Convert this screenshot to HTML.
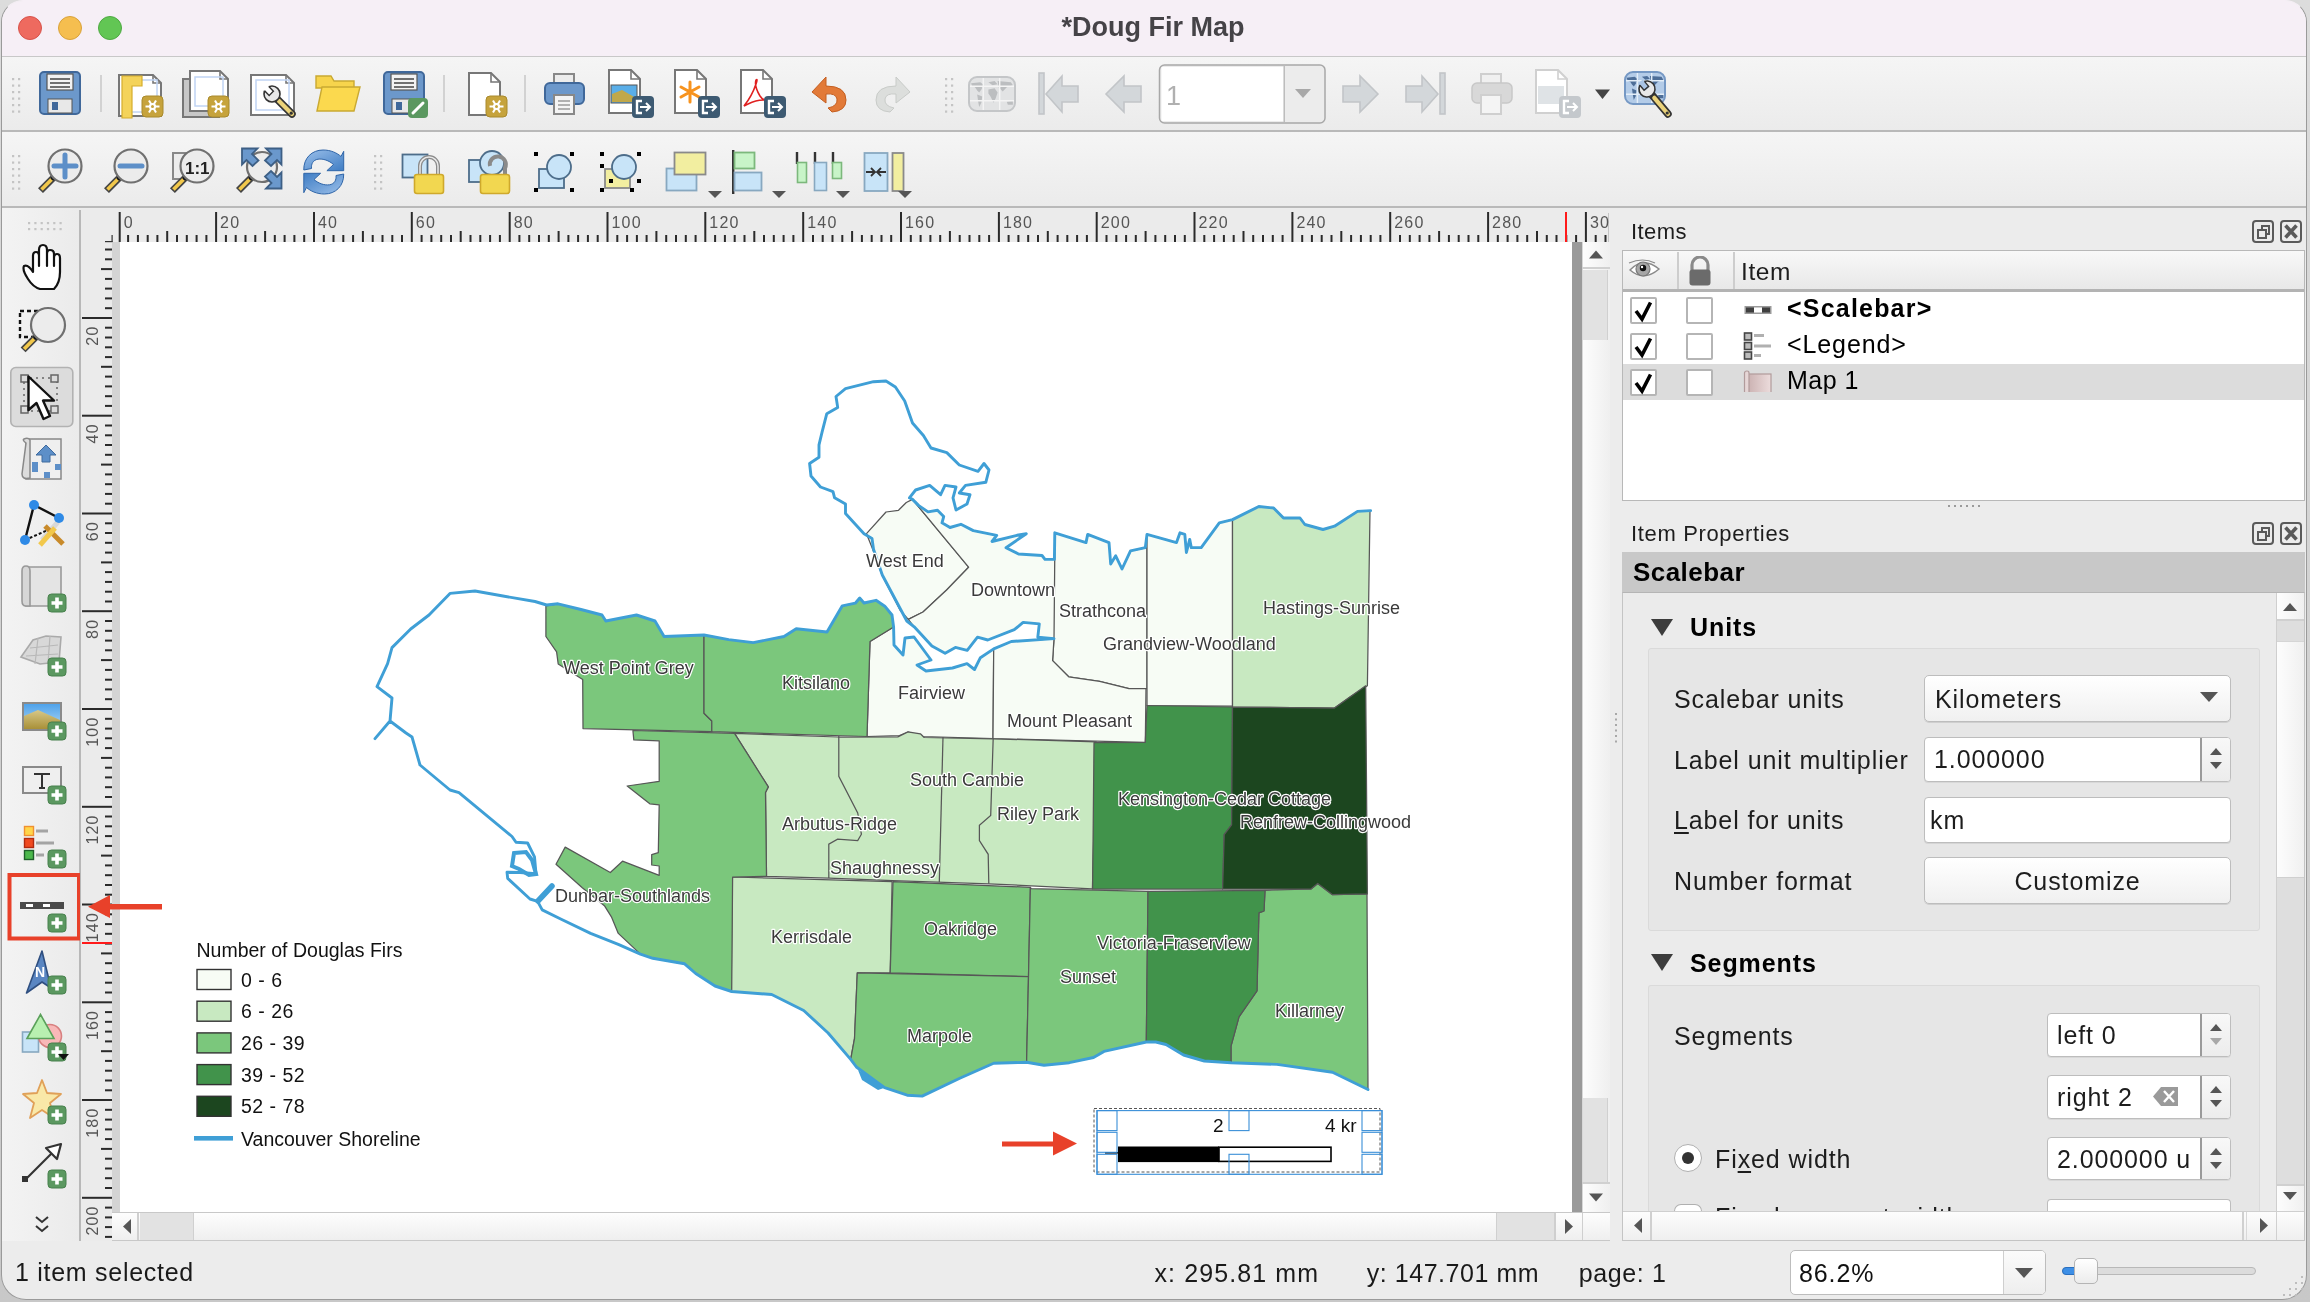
<!DOCTYPE html>
<html><head><meta charset="utf-8">
<style>
*{margin:0;padding:0;box-sizing:border-box}
html,body{width:2310px;height:1302px;overflow:hidden;background:#cfcfcf;font-family:"Liberation Sans", sans-serif}
body{will-change:transform}
.a{position:absolute}
.t{position:absolute;white-space:nowrap;color:#1d1d1d;line-height:1}
</style></head><body>
<div class="a" style="left:0;top:0;width:2310px;height:1302px;background:linear-gradient(#dcdcdc,#c8c8c8)"></div>
<div class="a" style="left:1px;top:0;width:2306px;height:1300px;border-radius:22px 22px 25px 25px;background:#ececec;border:1px solid #9a9a9a;border-top-color:#f6eff6;overflow:hidden">
</div>
<!-- title bar -->
<div class="a" style="left:2px;top:1px;width:2304px;height:55px;background:#f6eff6;border-radius:21px 21px 0 0"></div>
<div class="a" style="left:2px;top:56px;width:2304px;height:1px;background:#c8c8c8"></div>
<div class="a" style="left:18px;top:16px;width:24px;height:24px;border-radius:50%;background:#ee6a5f;border:1px solid #d8524a"></div>
<div class="a" style="left:58px;top:16px;width:24px;height:24px;border-radius:50%;background:#f5be4f;border:1px solid #d9a23a"></div>
<div class="a" style="left:98px;top:16px;width:24px;height:24px;border-radius:50%;background:#62c654;border:1px solid #4ea942"></div>
<div class="t" style="left:0;width:2306px;text-align:center;top:14px;font-size:27px;font-weight:bold;color:#454347">*Doug Fir Map</div>
<!-- toolbars -->
<div class="a" style="left:2px;top:57px;width:2304px;height:74px;background:linear-gradient(#f5f5f5,#ebebeb)"></div>
<div class="a" style="left:2px;top:130px;width:2304px;height:2px;background:#b9b9b9"></div>
<div class="a" style="left:2px;top:132px;width:2304px;height:75px;background:linear-gradient(#f5f5f5,#ebebeb)"></div>
<div class="a" style="left:2px;top:206px;width:2304px;height:2px;background:#b9b9b9"></div>
<!-- main area -->
<div class="a" style="left:2px;top:208px;width:2304px;height:1033px;background:#ececec"></div>
<div class="a" style="left:2px;top:208px;width:78px;height:1033px;background:linear-gradient(90deg,#f3f3f3,#ebebeb)"></div>
<div class="a" style="left:79px;top:210px;width:2px;height:1031px;background:#b8b8b8"></div>
<!-- canvas -->
<div class="a" style="left:112px;top:242px;width:1470px;height:970px;background:#d4d4d4"></div>
<div class="a" style="left:120px;top:242px;width:1452px;height:970px;background:#ffffff"></div>
<div class="a" style="left:1572px;top:242px;width:10px;height:970px;background:#9a9a9a"></div>
<!-- v scrollbar -->
<div class="a" style="left:1582px;top:242px;width:28px;height:970px;background:linear-gradient(90deg,#fdfdfd,#efefef);border-left:1px solid #d8d8d8"></div>
<div class="a" style="left:1582px;top:267px;width:28px;height:2px;background:#d0d0d0"></div>
<div class="a" style="left:1583px;top:270px;width:25px;height:70px;background:#e2e2e2;border-right:1px solid #d0d0d0"></div>
<div class="a" style="left:1583px;top:1098px;width:25px;height:84px;background:#e2e2e2;border-right:1px solid #d0d0d0"></div>
<div class="a" style="left:1582px;top:1182px;width:28px;height:2px;background:#d0d0d0"></div>
<svg class="a" style="left:1582px;top:242px" width="28" height="970"><path d="M7,16.5 L21,16.5 L14,8.5Z" fill="#555"/><path d="M7,951.5 L21,951.5 L14,959.5Z" fill="#555"/></svg>
<!-- h scrollbar -->
<div class="a" style="left:112px;top:1212px;width:1498px;height:29px;background:linear-gradient(#fdfdfd,#efefef);border-top:1px solid #c8c8c8;border-bottom:1px solid #c8c8c8"></div>
<div class="a" style="left:137px;top:1213px;width:2px;height:27px;background:#cfcfcf"></div>
<div class="a" style="left:140px;top:1213px;width:54px;height:27px;background:#e2e2e2;border-right:1px solid #d0d0d0"></div>
<div class="a" style="left:1496px;top:1213px;width:58px;height:27px;background:#e2e2e2;border-left:1px solid #d0d0d0"></div>
<div class="a" style="left:1554px;top:1213px;width:2px;height:27px;background:#cfcfcf"></div>
<div class="a" style="left:1582px;top:1213px;width:1px;height:27px;background:#cfcfcf"></div>
<svg class="a" style="left:112px;top:1212px" width="1498" height="29"><path d="M19,7 L19,22 L11,14.5Z" fill="#555"/><path d="M1453,7 L1453,22 L1461,14.5Z" fill="#555"/></svg>
<!-- rulers -->
<svg class="a" style="left:0;top:0" width="1609" height="1242" font-family='"Liberation Sans", sans-serif'>
<rect x="81" y="209" width="1529" height="33" fill="#ebebeb"/>
<rect x="81" y="209" width="31" height="1032" fill="#ebebeb"/>
<rect x="1608" y="213" width="1" height="29" fill="#c4c4c4"/>
<rect x="111.5" y="235" width="1.2" height="7" fill="#333"/><rect x="105" y="241" width="7.5" height="1.2" fill="#333"/>
<rect x="118.7" y="212" width="2" height="30" fill="#2a2a2a"/>
<text x="123.7" y="228" font-size="16" letter-spacing="1.2" fill="#555">0</text>
<rect x="127.1" y="235" width="2" height="7" fill="#2a2a2a"/>
<rect x="136.9" y="235" width="2" height="7" fill="#2a2a2a"/>
<rect x="146.7" y="235" width="2" height="7" fill="#2a2a2a"/>
<rect x="156.4" y="235" width="2" height="7" fill="#2a2a2a"/>
<rect x="166.2" y="231" width="2" height="11" fill="#2a2a2a"/>
<rect x="176.0" y="235" width="2" height="7" fill="#2a2a2a"/>
<rect x="185.8" y="235" width="2" height="7" fill="#2a2a2a"/>
<rect x="195.6" y="235" width="2" height="7" fill="#2a2a2a"/>
<rect x="205.4" y="235" width="2" height="7" fill="#2a2a2a"/>
<rect x="215.1" y="212" width="2" height="30" fill="#2a2a2a"/>
<text x="220.1" y="228" font-size="16" letter-spacing="1.2" fill="#555">20</text>
<rect x="224.9" y="235" width="2" height="7" fill="#2a2a2a"/>
<rect x="234.7" y="235" width="2" height="7" fill="#2a2a2a"/>
<rect x="244.5" y="235" width="2" height="7" fill="#2a2a2a"/>
<rect x="254.3" y="235" width="2" height="7" fill="#2a2a2a"/>
<rect x="264.1" y="231" width="2" height="11" fill="#2a2a2a"/>
<rect x="273.8" y="235" width="2" height="7" fill="#2a2a2a"/>
<rect x="283.6" y="235" width="2" height="7" fill="#2a2a2a"/>
<rect x="293.4" y="235" width="2" height="7" fill="#2a2a2a"/>
<rect x="303.2" y="235" width="2" height="7" fill="#2a2a2a"/>
<rect x="313.0" y="212" width="2" height="30" fill="#2a2a2a"/>
<text x="318.0" y="228" font-size="16" letter-spacing="1.2" fill="#555">40</text>
<rect x="322.8" y="235" width="2" height="7" fill="#2a2a2a"/>
<rect x="332.5" y="235" width="2" height="7" fill="#2a2a2a"/>
<rect x="342.3" y="235" width="2" height="7" fill="#2a2a2a"/>
<rect x="352.1" y="235" width="2" height="7" fill="#2a2a2a"/>
<rect x="361.9" y="231" width="2" height="11" fill="#2a2a2a"/>
<rect x="371.7" y="235" width="2" height="7" fill="#2a2a2a"/>
<rect x="381.5" y="235" width="2" height="7" fill="#2a2a2a"/>
<rect x="391.3" y="235" width="2" height="7" fill="#2a2a2a"/>
<rect x="401.0" y="235" width="2" height="7" fill="#2a2a2a"/>
<rect x="410.8" y="212" width="2" height="30" fill="#2a2a2a"/>
<text x="415.8" y="228" font-size="16" letter-spacing="1.2" fill="#555">60</text>
<rect x="420.6" y="235" width="2" height="7" fill="#2a2a2a"/>
<rect x="430.4" y="235" width="2" height="7" fill="#2a2a2a"/>
<rect x="440.2" y="235" width="2" height="7" fill="#2a2a2a"/>
<rect x="450.0" y="235" width="2" height="7" fill="#2a2a2a"/>
<rect x="459.7" y="231" width="2" height="11" fill="#2a2a2a"/>
<rect x="469.5" y="235" width="2" height="7" fill="#2a2a2a"/>
<rect x="479.3" y="235" width="2" height="7" fill="#2a2a2a"/>
<rect x="489.1" y="235" width="2" height="7" fill="#2a2a2a"/>
<rect x="498.9" y="235" width="2" height="7" fill="#2a2a2a"/>
<rect x="508.7" y="212" width="2" height="30" fill="#2a2a2a"/>
<text x="513.7" y="228" font-size="16" letter-spacing="1.2" fill="#555">80</text>
<rect x="518.4" y="235" width="2" height="7" fill="#2a2a2a"/>
<rect x="528.2" y="235" width="2" height="7" fill="#2a2a2a"/>
<rect x="538.0" y="235" width="2" height="7" fill="#2a2a2a"/>
<rect x="547.8" y="235" width="2" height="7" fill="#2a2a2a"/>
<rect x="557.6" y="231" width="2" height="11" fill="#2a2a2a"/>
<rect x="567.4" y="235" width="2" height="7" fill="#2a2a2a"/>
<rect x="577.1" y="235" width="2" height="7" fill="#2a2a2a"/>
<rect x="586.9" y="235" width="2" height="7" fill="#2a2a2a"/>
<rect x="596.7" y="235" width="2" height="7" fill="#2a2a2a"/>
<rect x="606.5" y="212" width="2" height="30" fill="#2a2a2a"/>
<text x="611.5" y="228" font-size="16" letter-spacing="1.2" fill="#555">100</text>
<rect x="616.3" y="235" width="2" height="7" fill="#2a2a2a"/>
<rect x="626.1" y="235" width="2" height="7" fill="#2a2a2a"/>
<rect x="635.9" y="235" width="2" height="7" fill="#2a2a2a"/>
<rect x="645.6" y="235" width="2" height="7" fill="#2a2a2a"/>
<rect x="655.4" y="231" width="2" height="11" fill="#2a2a2a"/>
<rect x="665.2" y="235" width="2" height="7" fill="#2a2a2a"/>
<rect x="675.0" y="235" width="2" height="7" fill="#2a2a2a"/>
<rect x="684.8" y="235" width="2" height="7" fill="#2a2a2a"/>
<rect x="694.6" y="235" width="2" height="7" fill="#2a2a2a"/>
<rect x="704.3" y="212" width="2" height="30" fill="#2a2a2a"/>
<text x="709.3" y="228" font-size="16" letter-spacing="1.2" fill="#555">120</text>
<rect x="714.1" y="235" width="2" height="7" fill="#2a2a2a"/>
<rect x="723.9" y="235" width="2" height="7" fill="#2a2a2a"/>
<rect x="733.7" y="235" width="2" height="7" fill="#2a2a2a"/>
<rect x="743.5" y="235" width="2" height="7" fill="#2a2a2a"/>
<rect x="753.3" y="231" width="2" height="11" fill="#2a2a2a"/>
<rect x="763.0" y="235" width="2" height="7" fill="#2a2a2a"/>
<rect x="772.8" y="235" width="2" height="7" fill="#2a2a2a"/>
<rect x="782.6" y="235" width="2" height="7" fill="#2a2a2a"/>
<rect x="792.4" y="235" width="2" height="7" fill="#2a2a2a"/>
<rect x="802.2" y="212" width="2" height="30" fill="#2a2a2a"/>
<text x="807.2" y="228" font-size="16" letter-spacing="1.2" fill="#555">140</text>
<rect x="812.0" y="235" width="2" height="7" fill="#2a2a2a"/>
<rect x="821.7" y="235" width="2" height="7" fill="#2a2a2a"/>
<rect x="831.5" y="235" width="2" height="7" fill="#2a2a2a"/>
<rect x="841.3" y="235" width="2" height="7" fill="#2a2a2a"/>
<rect x="851.1" y="231" width="2" height="11" fill="#2a2a2a"/>
<rect x="860.9" y="235" width="2" height="7" fill="#2a2a2a"/>
<rect x="870.7" y="235" width="2" height="7" fill="#2a2a2a"/>
<rect x="880.5" y="235" width="2" height="7" fill="#2a2a2a"/>
<rect x="890.2" y="235" width="2" height="7" fill="#2a2a2a"/>
<rect x="900.0" y="212" width="2" height="30" fill="#2a2a2a"/>
<text x="905.0" y="228" font-size="16" letter-spacing="1.2" fill="#555">160</text>
<rect x="909.8" y="235" width="2" height="7" fill="#2a2a2a"/>
<rect x="919.6" y="235" width="2" height="7" fill="#2a2a2a"/>
<rect x="929.4" y="235" width="2" height="7" fill="#2a2a2a"/>
<rect x="939.2" y="235" width="2" height="7" fill="#2a2a2a"/>
<rect x="948.9" y="231" width="2" height="11" fill="#2a2a2a"/>
<rect x="958.7" y="235" width="2" height="7" fill="#2a2a2a"/>
<rect x="968.5" y="235" width="2" height="7" fill="#2a2a2a"/>
<rect x="978.3" y="235" width="2" height="7" fill="#2a2a2a"/>
<rect x="988.1" y="235" width="2" height="7" fill="#2a2a2a"/>
<rect x="997.9" y="212" width="2" height="30" fill="#2a2a2a"/>
<text x="1002.9" y="228" font-size="16" letter-spacing="1.2" fill="#555">180</text>
<rect x="1007.6" y="235" width="2" height="7" fill="#2a2a2a"/>
<rect x="1017.4" y="235" width="2" height="7" fill="#2a2a2a"/>
<rect x="1027.2" y="235" width="2" height="7" fill="#2a2a2a"/>
<rect x="1037.0" y="235" width="2" height="7" fill="#2a2a2a"/>
<rect x="1046.8" y="231" width="2" height="11" fill="#2a2a2a"/>
<rect x="1056.6" y="235" width="2" height="7" fill="#2a2a2a"/>
<rect x="1066.3" y="235" width="2" height="7" fill="#2a2a2a"/>
<rect x="1076.1" y="235" width="2" height="7" fill="#2a2a2a"/>
<rect x="1085.9" y="235" width="2" height="7" fill="#2a2a2a"/>
<rect x="1095.7" y="212" width="2" height="30" fill="#2a2a2a"/>
<text x="1100.7" y="228" font-size="16" letter-spacing="1.2" fill="#555">200</text>
<rect x="1105.5" y="235" width="2" height="7" fill="#2a2a2a"/>
<rect x="1115.3" y="235" width="2" height="7" fill="#2a2a2a"/>
<rect x="1125.1" y="235" width="2" height="7" fill="#2a2a2a"/>
<rect x="1134.8" y="235" width="2" height="7" fill="#2a2a2a"/>
<rect x="1144.6" y="231" width="2" height="11" fill="#2a2a2a"/>
<rect x="1154.4" y="235" width="2" height="7" fill="#2a2a2a"/>
<rect x="1164.2" y="235" width="2" height="7" fill="#2a2a2a"/>
<rect x="1174.0" y="235" width="2" height="7" fill="#2a2a2a"/>
<rect x="1183.8" y="235" width="2" height="7" fill="#2a2a2a"/>
<rect x="1193.5" y="212" width="2" height="30" fill="#2a2a2a"/>
<text x="1198.5" y="228" font-size="16" letter-spacing="1.2" fill="#555">220</text>
<rect x="1203.3" y="235" width="2" height="7" fill="#2a2a2a"/>
<rect x="1213.1" y="235" width="2" height="7" fill="#2a2a2a"/>
<rect x="1222.9" y="235" width="2" height="7" fill="#2a2a2a"/>
<rect x="1232.7" y="235" width="2" height="7" fill="#2a2a2a"/>
<rect x="1242.5" y="231" width="2" height="11" fill="#2a2a2a"/>
<rect x="1252.2" y="235" width="2" height="7" fill="#2a2a2a"/>
<rect x="1262.0" y="235" width="2" height="7" fill="#2a2a2a"/>
<rect x="1271.8" y="235" width="2" height="7" fill="#2a2a2a"/>
<rect x="1281.6" y="235" width="2" height="7" fill="#2a2a2a"/>
<rect x="1291.4" y="212" width="2" height="30" fill="#2a2a2a"/>
<text x="1296.4" y="228" font-size="16" letter-spacing="1.2" fill="#555">240</text>
<rect x="1301.2" y="235" width="2" height="7" fill="#2a2a2a"/>
<rect x="1310.9" y="235" width="2" height="7" fill="#2a2a2a"/>
<rect x="1320.7" y="235" width="2" height="7" fill="#2a2a2a"/>
<rect x="1330.5" y="235" width="2" height="7" fill="#2a2a2a"/>
<rect x="1340.3" y="231" width="2" height="11" fill="#2a2a2a"/>
<rect x="1350.1" y="235" width="2" height="7" fill="#2a2a2a"/>
<rect x="1359.9" y="235" width="2" height="7" fill="#2a2a2a"/>
<rect x="1369.7" y="235" width="2" height="7" fill="#2a2a2a"/>
<rect x="1379.4" y="235" width="2" height="7" fill="#2a2a2a"/>
<rect x="1389.2" y="212" width="2" height="30" fill="#2a2a2a"/>
<text x="1394.2" y="228" font-size="16" letter-spacing="1.2" fill="#555">260</text>
<rect x="1399.0" y="235" width="2" height="7" fill="#2a2a2a"/>
<rect x="1408.8" y="235" width="2" height="7" fill="#2a2a2a"/>
<rect x="1418.6" y="235" width="2" height="7" fill="#2a2a2a"/>
<rect x="1428.4" y="235" width="2" height="7" fill="#2a2a2a"/>
<rect x="1438.1" y="231" width="2" height="11" fill="#2a2a2a"/>
<rect x="1447.9" y="235" width="2" height="7" fill="#2a2a2a"/>
<rect x="1457.7" y="235" width="2" height="7" fill="#2a2a2a"/>
<rect x="1467.5" y="235" width="2" height="7" fill="#2a2a2a"/>
<rect x="1477.3" y="235" width="2" height="7" fill="#2a2a2a"/>
<rect x="1487.1" y="212" width="2" height="30" fill="#2a2a2a"/>
<text x="1492.1" y="228" font-size="16" letter-spacing="1.2" fill="#555">280</text>
<rect x="1496.8" y="235" width="2" height="7" fill="#2a2a2a"/>
<rect x="1506.6" y="235" width="2" height="7" fill="#2a2a2a"/>
<rect x="1516.4" y="235" width="2" height="7" fill="#2a2a2a"/>
<rect x="1526.2" y="235" width="2" height="7" fill="#2a2a2a"/>
<rect x="1536.0" y="231" width="2" height="11" fill="#2a2a2a"/>
<rect x="1545.8" y="235" width="2" height="7" fill="#2a2a2a"/>
<rect x="1555.5" y="235" width="2" height="7" fill="#2a2a2a"/>
<rect x="1565.3" y="235" width="2" height="7" fill="#2a2a2a"/>
<rect x="1575.1" y="235" width="2" height="7" fill="#2a2a2a"/>
<rect x="1584.9" y="212" width="2" height="30" fill="#2a2a2a"/>
<text x="1589.9" y="228" font-size="16" letter-spacing="1.2" fill="#555">300</text>
<rect x="1594.7" y="235" width="2" height="7" fill="#2a2a2a"/>
<rect x="1604.5" y="235" width="2" height="7" fill="#2a2a2a"/>
<rect x="105" y="248.5" width="7" height="2" fill="#2a2a2a"/>
<rect x="105" y="258.3" width="7" height="2" fill="#2a2a2a"/>
<rect x="101" y="268.1" width="11" height="2" fill="#2a2a2a"/>
<rect x="105" y="277.9" width="7" height="2" fill="#2a2a2a"/>
<rect x="105" y="287.6" width="7" height="2" fill="#2a2a2a"/>
<rect x="105" y="297.4" width="7" height="2" fill="#2a2a2a"/>
<rect x="105" y="307.2" width="7" height="2" fill="#2a2a2a"/>
<rect x="82" y="317.0" width="30" height="2" fill="#2a2a2a"/>
<text transform="translate(98,325.5) rotate(-90)" text-anchor="end" font-size="16" letter-spacing="1.2" fill="#555">20</text>
<rect x="105" y="326.7" width="7" height="2" fill="#2a2a2a"/>
<rect x="105" y="336.5" width="7" height="2" fill="#2a2a2a"/>
<rect x="105" y="346.3" width="7" height="2" fill="#2a2a2a"/>
<rect x="105" y="356.1" width="7" height="2" fill="#2a2a2a"/>
<rect x="101" y="365.8" width="11" height="2" fill="#2a2a2a"/>
<rect x="105" y="375.6" width="7" height="2" fill="#2a2a2a"/>
<rect x="105" y="385.4" width="7" height="2" fill="#2a2a2a"/>
<rect x="105" y="395.2" width="7" height="2" fill="#2a2a2a"/>
<rect x="105" y="404.9" width="7" height="2" fill="#2a2a2a"/>
<rect x="82" y="414.7" width="30" height="2" fill="#2a2a2a"/>
<text transform="translate(98,423.2) rotate(-90)" text-anchor="end" font-size="16" letter-spacing="1.2" fill="#555">40</text>
<rect x="105" y="424.5" width="7" height="2" fill="#2a2a2a"/>
<rect x="105" y="434.3" width="7" height="2" fill="#2a2a2a"/>
<rect x="105" y="444.0" width="7" height="2" fill="#2a2a2a"/>
<rect x="105" y="453.8" width="7" height="2" fill="#2a2a2a"/>
<rect x="101" y="463.6" width="11" height="2" fill="#2a2a2a"/>
<rect x="105" y="473.4" width="7" height="2" fill="#2a2a2a"/>
<rect x="105" y="483.2" width="7" height="2" fill="#2a2a2a"/>
<rect x="105" y="492.9" width="7" height="2" fill="#2a2a2a"/>
<rect x="105" y="502.7" width="7" height="2" fill="#2a2a2a"/>
<rect x="82" y="512.5" width="30" height="2" fill="#2a2a2a"/>
<text transform="translate(98,521.0) rotate(-90)" text-anchor="end" font-size="16" letter-spacing="1.2" fill="#555">60</text>
<rect x="105" y="522.3" width="7" height="2" fill="#2a2a2a"/>
<rect x="105" y="532.0" width="7" height="2" fill="#2a2a2a"/>
<rect x="105" y="541.8" width="7" height="2" fill="#2a2a2a"/>
<rect x="105" y="551.6" width="7" height="2" fill="#2a2a2a"/>
<rect x="101" y="561.4" width="11" height="2" fill="#2a2a2a"/>
<rect x="105" y="571.1" width="7" height="2" fill="#2a2a2a"/>
<rect x="105" y="580.9" width="7" height="2" fill="#2a2a2a"/>
<rect x="105" y="590.7" width="7" height="2" fill="#2a2a2a"/>
<rect x="105" y="600.5" width="7" height="2" fill="#2a2a2a"/>
<rect x="82" y="610.2" width="30" height="2" fill="#2a2a2a"/>
<text transform="translate(98,618.7) rotate(-90)" text-anchor="end" font-size="16" letter-spacing="1.2" fill="#555">80</text>
<rect x="105" y="620.0" width="7" height="2" fill="#2a2a2a"/>
<rect x="105" y="629.8" width="7" height="2" fill="#2a2a2a"/>
<rect x="105" y="639.6" width="7" height="2" fill="#2a2a2a"/>
<rect x="105" y="649.3" width="7" height="2" fill="#2a2a2a"/>
<rect x="101" y="659.1" width="11" height="2" fill="#2a2a2a"/>
<rect x="105" y="668.9" width="7" height="2" fill="#2a2a2a"/>
<rect x="105" y="678.7" width="7" height="2" fill="#2a2a2a"/>
<rect x="105" y="688.4" width="7" height="2" fill="#2a2a2a"/>
<rect x="105" y="698.2" width="7" height="2" fill="#2a2a2a"/>
<rect x="82" y="708.0" width="30" height="2" fill="#2a2a2a"/>
<text transform="translate(98,716.5) rotate(-90)" text-anchor="end" font-size="16" letter-spacing="1.2" fill="#555">100</text>
<rect x="105" y="717.8" width="7" height="2" fill="#2a2a2a"/>
<rect x="105" y="727.6" width="7" height="2" fill="#2a2a2a"/>
<rect x="105" y="737.3" width="7" height="2" fill="#2a2a2a"/>
<rect x="105" y="747.1" width="7" height="2" fill="#2a2a2a"/>
<rect x="101" y="756.9" width="11" height="2" fill="#2a2a2a"/>
<rect x="105" y="766.7" width="7" height="2" fill="#2a2a2a"/>
<rect x="105" y="776.4" width="7" height="2" fill="#2a2a2a"/>
<rect x="105" y="786.2" width="7" height="2" fill="#2a2a2a"/>
<rect x="105" y="796.0" width="7" height="2" fill="#2a2a2a"/>
<rect x="82" y="805.8" width="30" height="2" fill="#2a2a2a"/>
<text transform="translate(98,814.3) rotate(-90)" text-anchor="end" font-size="16" letter-spacing="1.2" fill="#555">120</text>
<rect x="105" y="815.5" width="7" height="2" fill="#2a2a2a"/>
<rect x="105" y="825.3" width="7" height="2" fill="#2a2a2a"/>
<rect x="105" y="835.1" width="7" height="2" fill="#2a2a2a"/>
<rect x="105" y="844.9" width="7" height="2" fill="#2a2a2a"/>
<rect x="101" y="854.6" width="11" height="2" fill="#2a2a2a"/>
<rect x="105" y="864.4" width="7" height="2" fill="#2a2a2a"/>
<rect x="105" y="874.2" width="7" height="2" fill="#2a2a2a"/>
<rect x="105" y="884.0" width="7" height="2" fill="#2a2a2a"/>
<rect x="105" y="893.7" width="7" height="2" fill="#2a2a2a"/>
<rect x="82" y="903.5" width="30" height="2" fill="#2a2a2a"/>
<text transform="translate(98,912.0) rotate(-90)" text-anchor="end" font-size="16" letter-spacing="1.2" fill="#555">140</text>
<rect x="105" y="913.3" width="7" height="2" fill="#2a2a2a"/>
<rect x="105" y="923.1" width="7" height="2" fill="#2a2a2a"/>
<rect x="105" y="932.8" width="7" height="2" fill="#2a2a2a"/>
<rect x="105" y="942.6" width="7" height="2" fill="#2a2a2a"/>
<rect x="101" y="952.4" width="11" height="2" fill="#2a2a2a"/>
<rect x="105" y="962.2" width="7" height="2" fill="#2a2a2a"/>
<rect x="105" y="972.0" width="7" height="2" fill="#2a2a2a"/>
<rect x="105" y="981.7" width="7" height="2" fill="#2a2a2a"/>
<rect x="105" y="991.5" width="7" height="2" fill="#2a2a2a"/>
<rect x="82" y="1001.3" width="30" height="2" fill="#2a2a2a"/>
<text transform="translate(98,1009.8) rotate(-90)" text-anchor="end" font-size="16" letter-spacing="1.2" fill="#555">160</text>
<rect x="105" y="1011.1" width="7" height="2" fill="#2a2a2a"/>
<rect x="105" y="1020.8" width="7" height="2" fill="#2a2a2a"/>
<rect x="105" y="1030.6" width="7" height="2" fill="#2a2a2a"/>
<rect x="105" y="1040.4" width="7" height="2" fill="#2a2a2a"/>
<rect x="101" y="1050.2" width="11" height="2" fill="#2a2a2a"/>
<rect x="105" y="1059.9" width="7" height="2" fill="#2a2a2a"/>
<rect x="105" y="1069.7" width="7" height="2" fill="#2a2a2a"/>
<rect x="105" y="1079.5" width="7" height="2" fill="#2a2a2a"/>
<rect x="105" y="1089.3" width="7" height="2" fill="#2a2a2a"/>
<rect x="82" y="1099.0" width="30" height="2" fill="#2a2a2a"/>
<text transform="translate(98,1107.5) rotate(-90)" text-anchor="end" font-size="16" letter-spacing="1.2" fill="#555">180</text>
<rect x="105" y="1108.8" width="7" height="2" fill="#2a2a2a"/>
<rect x="105" y="1118.6" width="7" height="2" fill="#2a2a2a"/>
<rect x="105" y="1128.4" width="7" height="2" fill="#2a2a2a"/>
<rect x="105" y="1138.1" width="7" height="2" fill="#2a2a2a"/>
<rect x="101" y="1147.9" width="11" height="2" fill="#2a2a2a"/>
<rect x="105" y="1157.7" width="7" height="2" fill="#2a2a2a"/>
<rect x="105" y="1167.5" width="7" height="2" fill="#2a2a2a"/>
<rect x="105" y="1177.2" width="7" height="2" fill="#2a2a2a"/>
<rect x="105" y="1187.0" width="7" height="2" fill="#2a2a2a"/>
<rect x="82" y="1196.8" width="30" height="2" fill="#2a2a2a"/>
<text transform="translate(98,1205.3) rotate(-90)" text-anchor="end" font-size="16" letter-spacing="1.2" fill="#555">200</text>
<rect x="105" y="1206.6" width="7" height="2" fill="#2a2a2a"/>
<rect x="105" y="1216.4" width="7" height="2" fill="#2a2a2a"/>
<rect x="105" y="1226.1" width="7" height="2" fill="#2a2a2a"/>
<rect x="105" y="1235.9" width="7" height="2" fill="#2a2a2a"/>
<rect x="1565" y="212" width="2" height="30" fill="#ff1a1a"/>
<rect x="82" y="942" width="30" height="2" fill="#ff1a1a"/>
</svg>
<svg class="a" style="left:0;top:0" width="1572" height="1212" font-family='"Liberation Sans", sans-serif'>
<polygon points="866.5,533.7 886,512 898.5,510.3 906.3,502.5 912.5,499.4 968.6,567.2 946.6,590 923,612 908.3,619.4 900,610 882,575 873,550" fill="#f7fcf5" stroke="#575757" stroke-width="1.25" stroke-linejoin="round"/>
<polygon points="912.5,499.4 918.8,505.6 928,511.9 937.5,510.3 943.7,516.6 942,522.8 950,527.5 960.9,524.3 973.3,530.6 996.7,535.3 992,541.5 1017,535.3 1026.3,533.7 1006,547.7 1018.5,554 1042,555.5 1045,559.4 1055,559.4 1055,638.6 1037.8,637.1 1039.3,623.9 1023.1,622.4 1014.3,629.7 987.8,640 977.5,637.1 967.2,650.3 955.4,647.4 945.1,653.3 931.9,646 914.2,626.8 908.3,619.4 923,612 946.6,590 968.6,567.2" fill="#f7fcf5" stroke="#575757" stroke-width="1.25" stroke-linejoin="round"/>
<polygon points="1055,533 1086,542.6 1087.7,534.4 1109,542.6 1110.7,564 1115.7,555.8 1122,569 1130.5,550.9 1147,547.6 1147,688.6 1129,688.6 1099.7,681.3 1068.7,676.8 1052.6,660.6 1054,638.6" fill="#f7fcf5" stroke="#575757" stroke-width="1.25" stroke-linejoin="round"/>
<polygon points="1147,534.4 1176.5,542.6 1180,532.8 1184.8,534.4 1186.4,552.5 1189.7,539.4 1191.3,547.6 1201.2,547.6 1219.3,522.9 1232.5,519.6 1232.5,706 1147,705.5" fill="#f7fcf5" stroke="#575757" stroke-width="1.25" stroke-linejoin="round"/>
<polygon points="870,641.5 893.6,627 894,645 903,655 905,638 914,637 931,660 917,665 926,671 952.5,668 967,663.6 974.5,669.5 980.4,657.7 993.7,648.9 993,738.7 923,736.5 908.3,732 899.5,735.7 867,736.5" fill="#f7fcf5" stroke="#575757" stroke-width="1.25" stroke-linejoin="round"/>
<polygon points="993.7,648.9 1011.3,641.5 1037.8,640 1054,638.6 1052.6,660.6 1068.7,676.8 1099.7,681.3 1129,688.6 1146,688.6 1145.3,742.3 993,738.7" fill="#f7fcf5" stroke="#575757" stroke-width="1.25" stroke-linejoin="round"/>
<polygon points="1232.5,519.6 1258.8,506.5 1273.6,508 1283.5,518 1300,518 1304.9,524.5 1323,529.5 1334.5,526.2 1357.5,511.4 1370,510.6 1367.4,685.8 1350,697 1334.5,708 1232.5,707" fill="#c8e9c1" stroke="#575757" stroke-width="1.25" stroke-linejoin="round"/>
<polygon points="734.5,733.3 838,737 897.8,736.9 907.9,731.9 920.4,733.8 924.2,737.5 993.2,738.8 1096.2,741.9 1092.4,888.8 988.8,883.8 892.8,880.6 828.8,878.1 766.5,876.3 765.5,792.5 768.3,786.9" fill="#c8e9c1" stroke="#575757" stroke-width="1.25" stroke-linejoin="round"/>
<polygon points="732.2,877 892.1,881.6 890.2,972.9 857.3,972.9 854.5,1038.7 850.7,1059.4 828.1,1033 803.7,1010.5 771.7,994.5 731.2,991.7" fill="#c8e9c1" stroke="#575757" stroke-width="1.25" stroke-linejoin="round"/>
<polygon points="545.9,605.8 558,603.8 581,609.5 602,615 605.8,621 636.5,615 655,621 664.1,636.5 704,635 704,713.3 711.8,721 711.8,731.7 583,728.6 582.7,679.5 558.2,664 556.6,651.9 545.9,636.5" fill="#7bc77c" stroke="#575757" stroke-width="1.25" stroke-linejoin="round"/>
<polygon points="704,635 728.7,639.6 753.2,642.6 784,636.5 796.2,628.8 827,632 842.3,605.8 855.3,603.2 859.7,598 864,603 876,600.3 884.8,606.2 892,615 893.6,627 870,641.5 867,736.5 711.8,731.7 711.8,721 704,713.3" fill="#7bc77c" stroke="#575757" stroke-width="1.25" stroke-linejoin="round"/>
<polygon points="632.9,730.5 734.5,733.3 768.3,786.9 765.5,792.5 766.5,876.3 732.6,877.2 731.7,991.5 715,986 695.7,973.5 684.6,963.8 652.8,958.3 640.4,954.1 618.3,933.4 611.4,916.8 604.4,905.7 582.3,887.8 556,864.2 565.2,847.1 610.3,872.5 622.5,861.2 659.2,875.3 659.2,866 651.7,865 651.7,854.6 658.3,852.7 659.2,804.8 649.8,803.8 627.2,786 659.2,781.3 659.2,740.8 633.8,739.9" fill="#7bc77c" stroke="#575757" stroke-width="1.25" stroke-linejoin="round"/>
<polygon points="893,881.6 1030.4,887.3 1028.5,976.7 890.2,972.9" fill="#7bc77c" stroke="#575757" stroke-width="1.25" stroke-linejoin="round"/>
<polygon points="857.3,972.9 1028.5,976.7 1026.6,1062.3 993.7,1063.2 959.8,1078.3 922.2,1096.1 907.2,1095.2 884.6,1087.7 856.4,1067 850.7,1059.4 854.5,1038.7" fill="#7bc77c" stroke="#575757" stroke-width="1.25" stroke-linejoin="round"/>
<polygon points="1031.2,888.7 1148,891.3 1146.3,1042 1104,1051.4 1093.5,1057.5 1069.3,1062.7 1044,1065.3 1026.6,1062.3 1028.5,976.7 1030.4,887.3" fill="#7bc77c" stroke="#575757" stroke-width="1.25" stroke-linejoin="round"/>
<polygon points="1265,890.4 1311,889 1317.7,883.5 1332.5,894.7 1367,893.9 1368,1089.5 1332.5,1072.2 1277,1064.4 1231,1062.7 1231,1046.2 1239,1016.8 1257,990.8 1258.9,912.9 1264,911" fill="#7bc77c" stroke="#575757" stroke-width="1.25" stroke-linejoin="round"/>
<polygon points="1094,742.5 1145.3,742.3 1147,705.5 1232.5,707 1231.6,824.8 1224.2,834.6 1222.6,889 1092.6,889" fill="#41934b" stroke="#575757" stroke-width="1.25" stroke-linejoin="round"/>
<polygon points="1148,891.3 1265,890.4 1264,911 1258.9,912.9 1257,990.8 1239,1016.8 1231,1046.2 1231,1062.7 1204.3,1061 1183.5,1055 1166,1044.5 1155.8,1042 1146.3,1042" fill="#41934b" stroke="#575757" stroke-width="1.25" stroke-linejoin="round"/>
<polygon points="1232.5,707 1334.5,708 1350,697 1365.7,685.8 1367.4,893.9 1332.5,894.7 1317.7,883.5 1311,889 1222.6,889 1224.2,834.6 1231.6,824.8" fill="#1c461f" stroke="#575757" stroke-width="1.25" stroke-linejoin="round"/>
<polyline points="838.8,736 838.8,776.4 857.7,812.9 861.4,834.2 857.7,840.5 837.6,839.2 828.8,844.2 828.8,878.1" fill="none" stroke="#575757" stroke-width="1.25"/>
<polyline points="943,737 939.3,881.9" fill="none" stroke="#575757" stroke-width="1.25"/>
<polyline points="993.2,738 990.7,815.4 979.4,825.4 979.4,840.5 988.2,854.3 988.8,883.8" fill="none" stroke="#575757" stroke-width="1.25"/>
<polyline points="1370.6,510.6 1357.5,511.4 1334.5,526.2 1323,529.5 1304.9,524.5 1300,518 1283.5,518 1273.6,508 1258.8,506.5 1232.5,519.6 1219.3,522.9 1201.2,547.6 1191.3,547.6 1189.7,539.4 1186.4,552.5 1184.8,534.4 1180,532.8 1176.5,542.6 1147,534.4 1145.3,547.6 1130.5,550.9 1122,569 1115.7,555.8 1110.7,564 1109,542.6 1087.7,534.4 1086,542.6 1054.8,532.8 1054.4,559.4 1045,559.4 1042,555.5 1018.5,554 1006,547.7 1026.3,533.7 1017,535.3 992,541.5 996.7,535.3 973.3,530.6 960.9,524.3 950,527.5 942,522.8 943.7,516.6 937.5,510.3 928,511.9 918.8,505.6 912.5,499.4 909.4,497.8 915.6,490 929.7,485.4 940.6,494.7 945,485.4 956,487 953,497.8 956,510 967,504 970,494.7 959.3,493 965.5,485.4 985.8,482.3 989,470 984,463.5 978,471.3 959.3,465 946.8,452.6 931,448 923.4,435.5 912.5,423 904.7,401 895.4,387 886,381 873.5,381.7 845.5,388.7 836,396.5 837.7,407.4 826.8,413.7 822,432.4 819,444.8 819,457.3 809.6,463.5 811,476 820.5,487 833,491.6 834.6,497.8 845.5,504 845.5,513.4 864,533.7 872,538.4 873.5,549.3 882.3,575 906.8,621 914.2,626.8 931.9,646 945.1,653.3 955.4,647.4 967.2,650.3 977.5,637.1 987.8,640 1014.3,629.7 1023.1,622.4 1039.3,623.9 1037.8,637.1 1054,638.6 1011.3,641.5 993.7,648.9 980.4,657.7 974.5,669.5 967,663.6 952.5,668 926,671 917,665 931,660 914,637 905,638 903,655 894,645 893.6,627 892,615 884.8,606.2 876,600.3 864,603 859.7,598 855.3,603.2 842.3,605.8 827,632 796.2,628.8 784,636.5 753.2,642.6 728.7,639.6 704,635 664.1,636.5 655,621 636.5,615 605.8,621 602,615 581,609.5 558,603.8 546.6,605 535,601.5 503,596 475,591 450,593.4 429,615 410.7,629 392,647.6 387.6,663.7 377,686.7 392,698 390,721 375,738.6 390,721 406,733 412,737 420,765 450,790 459,792.7 512,836.5 516,842.3 527.6,843 534.5,856.9 536,873.8 520,872.5 507,872.2 507.7,878.4 530,899 537.6,901.4 551.4,886.8 537.6,901.4 542.2,909.9 560.7,919 590.6,933.4 618.3,944.4 640.4,954.1 652.8,958.3 684.6,963.8 695.7,973.5 715,986 731.7,991.5 771.7,994.5 803.7,1010.5 828.1,1033 850.7,1059.4 856.4,1067 884.6,1087.7 907.2,1095.2 922.2,1096.1 959.8,1078.3 993.7,1063.2 1026.6,1062.3 1044,1065.3 1069.3,1062.7 1093.5,1057.5 1104,1051.4 1146.3,1042 1155.8,1042 1166,1044.5 1183.5,1055 1204.3,1061 1231,1062.7 1277,1064.4 1332.5,1072.2 1368,1089.5" fill="none" stroke="#3f9fd6" stroke-width="2.9" stroke-linejoin="round" stroke-linecap="round"/>
<path d="M858,1070 L872,1078 L884,1088 L878,1090 L862,1080Z" fill="#3f9fd6"/>
<path d="M514,853 L526,852 L532,860 L536,874 L529,875 L519,869 L512,866Z" fill="none" stroke="#3f9fd6" stroke-width="4"/><path d="M538,901 L552,886" stroke="#3f9fd6" stroke-width="5.5" stroke-linecap="round"/>
<g font-size="18" fill="#3a3a3a" stroke="#ffffff" stroke-width="2.4" paint-order="stroke" stroke-linejoin="round">
<text x="866" y="567">West End</text>
<text x="971" y="596">Downtown</text>
<text x="1059" y="617">Strathcona</text>
<text x="1263" y="614">Hastings-Sunrise</text>
<text x="1103" y="650">Grandview-Woodland</text>
<text x="563" y="674">West Point Grey</text>
<text x="782" y="689">Kitsilano</text>
<text x="898" y="699">Fairview</text>
<text x="1007" y="727">Mount Pleasant</text>
<text x="910" y="786">South Cambie</text>
<text x="997" y="820">Riley Park</text>
<text x="1118" y="805">Kensington-Cedar Cottage</text>
<text x="1240" y="828">Renfrew-Collingwood</text>
<text x="782" y="830">Arbutus-Ridge</text>
<text x="830" y="874">Shaughnessy</text>
<text x="555" y="902">Dunbar-Southlands</text>
<text x="771" y="943">Kerrisdale</text>
<text x="924" y="935">Oakridge</text>
<text x="1097" y="949">Victoria-Fraserview</text>
<text x="1060" y="983">Sunset</text>
<text x="1275" y="1017">Killarney</text>
<text x="907" y="1042">Marpole</text>
</g>
<g font-size="19.5" fill="#111">
<text x="196.5" y="957">Number of Douglas Firs</text>
<rect x="197" y="969.5" width="34" height="20" fill="#f7fcf5" stroke="#333" stroke-width="1.4"/>
<text x="241" y="986.5" letter-spacing="0.5">0 - 6</text>
<rect x="197" y="1001.2" width="34" height="20" fill="#c8e9c1" stroke="#333" stroke-width="1.4"/>
<text x="241" y="1018.2" letter-spacing="0.5">6 - 26</text>
<rect x="197" y="1032.9" width="34" height="20" fill="#7bc77c" stroke="#333" stroke-width="1.4"/>
<text x="241" y="1049.9" letter-spacing="0.5">26 - 39</text>
<rect x="197" y="1064.6" width="34" height="20" fill="#41934b" stroke="#333" stroke-width="1.4"/>
<text x="241" y="1081.6" letter-spacing="0.5">39 - 52</text>
<rect x="197" y="1096.3" width="34" height="20" fill="#1c461f" stroke="#333" stroke-width="1.4"/>
<text x="241" y="1113.3" letter-spacing="0.5">52 - 78</text>
<rect x="194" y="1136" width="39" height="4.6" fill="#3f9fd6"/>
<text x="241" y="1145.5">Vancouver Shoreline</text>
</g>
<rect x="1118" y="1146.5" width="101" height="15.6" fill="#000"/>
<rect x="1219" y="1147.2" width="112" height="14.2" fill="#fff" stroke="#000" stroke-width="1.6"/>
<rect x="1105" y="1152" width="13" height="1.6" fill="#000"/>
<g font-size="19" fill="#111"><text x="1213" y="1132">2</text><text x="1325" y="1132">4 kr</text></g>
<rect x="1094" y="1108.5" width="286" height="63.5" fill="none" stroke="#555" stroke-width="1" stroke-dasharray="3,2"/>
<g fill="none" stroke="#3a8fd8" stroke-width="1.1">
<rect x="1097" y="1110.6" width="285" height="63.7"/>
<rect x="1097" y="1110.6" width="20" height="20" fill="#fff" fill-opacity="0"/>
<rect x="1097" y="1132.3" width="20" height="20" fill="#fff" fill-opacity="0"/>
<rect x="1097" y="1154.3" width="20" height="20" fill="#fff" fill-opacity="0"/>
<rect x="1229" y="1110.6" width="20" height="20" fill="#fff" fill-opacity="0"/>
<rect x="1229" y="1154.3" width="20" height="20" fill="#fff" fill-opacity="0"/>
<rect x="1362" y="1110.6" width="20" height="20" fill="#fff" fill-opacity="0"/>
<rect x="1362" y="1132.3" width="20" height="20" fill="#fff" fill-opacity="0"/>
<rect x="1362" y="1154.3" width="20" height="20" fill="#fff" fill-opacity="0"/>
</g>
<path d="M1002,1141.5 L1053,1141.5 L1053,1131.5 L1077,1143.5 L1053,1155.5 L1053,1146.5 L1002,1146.5Z" fill="#e8412a"/>
</svg>
<svg class="a" style="left:0;top:0" width="1700" height="210">
<rect x="12" y="78.0" width="2.2" height="2.2" fill="#c4c4c4"/><rect x="18" y="78.0" width="2.2" height="2.2" fill="#c4c4c4"/><rect x="12" y="84.5" width="2.2" height="2.2" fill="#c4c4c4"/><rect x="18" y="84.5" width="2.2" height="2.2" fill="#c4c4c4"/><rect x="12" y="91.0" width="2.2" height="2.2" fill="#c4c4c4"/><rect x="18" y="91.0" width="2.2" height="2.2" fill="#c4c4c4"/><rect x="12" y="97.5" width="2.2" height="2.2" fill="#c4c4c4"/><rect x="18" y="97.5" width="2.2" height="2.2" fill="#c4c4c4"/><rect x="12" y="104.0" width="2.2" height="2.2" fill="#c4c4c4"/><rect x="18" y="104.0" width="2.2" height="2.2" fill="#c4c4c4"/><rect x="12" y="110.5" width="2.2" height="2.2" fill="#c4c4c4"/><rect x="18" y="110.5" width="2.2" height="2.2" fill="#c4c4c4"/>
<rect x="40" y="72" width="40" height="42" rx="4" fill="#6c98cb" stroke="#40689a" stroke-width="2"/><rect x="47" y="74" width="26" height="16" fill="#f2f2f2" stroke="#555" stroke-width="1.2"/><path d="M50,79 H70 M50,83 H70 M50,87 H70" stroke="#444" stroke-width="1.3"/><rect x="48" y="99" width="24" height="14" fill="#e8e8e8" stroke="#555" stroke-width="1"/><rect x="52" y="102" width="6" height="8" fill="#40689a"/>
<rect x="100" y="75" width="2" height="37" fill="#d2d2d2"/>
<path d="M119,75 H153 L161,83 V116 H119 Z" fill="#fff" stroke="#777" stroke-width="2"/><path d="M153,75 V83 H161" fill="none" stroke="#777" stroke-width="1.6"/>
<rect x="126" y="80" width="31" height="32" fill="none" stroke="#c0d4f4" stroke-width="1.5"/>
<path d="M122,76 H142 V86 H132 V118 H122Z" fill="#f4d35a" stroke="#d6ad2c" stroke-width="1.2"/>
<rect x="142" y="96" width="21" height="21" rx="4" fill="#c6a33c" stroke="#a98a2c" stroke-width="1"/><path d="M152.5,106.5 L159.5,106.5" stroke="#fff" stroke-width="2"/><path d="M152.5,106.5 L145.5,106.5" stroke="#fff" stroke-width="2"/><path d="M152.5,106.5 L156.0,112.6" stroke="#fff" stroke-width="2"/><path d="M152.5,106.5 L149.0,112.6" stroke="#fff" stroke-width="2"/><path d="M152.5,106.5 L156.0,100.4" stroke="#fff" stroke-width="2"/><path d="M152.5,106.5 L149.0,100.4" stroke="#fff" stroke-width="2"/><circle cx="152.5" cy="106.5" r="3.6" fill="#fff"/><circle cx="152.5" cy="106.5" r="1.5" fill="#c6a33c"/>
<rect x="183" y="79" width="36" height="38" fill="#c8c8c8" stroke="#777" stroke-width="2"/>
<path d="M190,71 H220 L228,79 V111 H190 Z" fill="#fff" stroke="#777" stroke-width="2"/><path d="M220,71 V79 H228" fill="none" stroke="#777" stroke-width="1.6"/>
<rect x="195" y="77" width="28" height="29" fill="none" stroke="#c0d4f4" stroke-width="1.5"/>
<rect x="208" y="96" width="21" height="21" rx="4" fill="#c6a33c" stroke="#a98a2c" stroke-width="1"/><path d="M218.5,106.5 L225.5,106.5" stroke="#fff" stroke-width="2"/><path d="M218.5,106.5 L211.5,106.5" stroke="#fff" stroke-width="2"/><path d="M218.5,106.5 L222.0,112.6" stroke="#fff" stroke-width="2"/><path d="M218.5,106.5 L215.0,112.6" stroke="#fff" stroke-width="2"/><path d="M218.5,106.5 L222.0,100.4" stroke="#fff" stroke-width="2"/><path d="M218.5,106.5 L215.0,100.4" stroke="#fff" stroke-width="2"/><circle cx="218.5" cy="106.5" r="3.6" fill="#fff"/><circle cx="218.5" cy="106.5" r="1.5" fill="#c6a33c"/>
<path d="M251,75 H286 L294,83 V115 H251 Z" fill="#fff" stroke="#777" stroke-width="2"/><path d="M286,75 V83 H294" fill="none" stroke="#777" stroke-width="1.6"/>
<rect x="256" y="80" width="33" height="30" fill="none" stroke="#c0d4f4" stroke-width="1.5"/>
<path d="M272,94 L292,114" stroke="#333" stroke-width="7.5" stroke-linecap="round"/><path d="M279.0,101.0 L292,114" stroke="#ead27a" stroke-width="4.2" stroke-linecap="round"/><circle cx="291.2" cy="113.2" r="1.6" fill="#333"/><g transform="translate(272,94) rotate(45.0)"><circle cx="0" cy="0" r="8" fill="#e8e8e8" stroke="#333" stroke-width="1.6"/><rect x="-10" y="-3" width="10" height="6" fill="#fff"/><path d="M-7.5,-3 H-1 V3 H-7.5" fill="none" stroke="#333" stroke-width="1.4"/></g>
<path d="M316,76 H331 L334,81 H354 V88 H316Z" fill="#f7d44c" stroke="#c9a932" stroke-width="1.4"/>
<path d="M317,111 L322,87 H360 L354,111Z" fill="#fbd94e" stroke="#c9a932" stroke-width="1.4"/>
<rect x="384" y="72" width="40" height="42" rx="4" fill="#6c98cb" stroke="#40689a" stroke-width="2"/><rect x="391" y="74" width="26" height="16" fill="#f2f2f2" stroke="#555" stroke-width="1.2"/><path d="M394,79 H414 M394,83 H414 M394,87 H414" stroke="#444" stroke-width="1.3"/><rect x="392" y="99" width="24" height="14" fill="#e8e8e8" stroke="#555" stroke-width="1"/><rect x="396" y="102" width="6" height="8" fill="#40689a"/>
<rect x="408" y="98" width="20" height="20" rx="4" fill="#5b9860"/><path d="M413,113 L423,103" stroke="#fff" stroke-width="3" stroke-linecap="round"/>
<rect x="443" y="75" width="2" height="37" fill="#d2d2d2"/>
<path d="M469,73 H491 L500,82 V115 H469 Z" fill="#fff" stroke="#777" stroke-width="2"/><path d="M491,73 V82 H500" fill="none" stroke="#777" stroke-width="1.6"/>
<rect x="486" y="96" width="21" height="21" rx="4" fill="#c6a33c" stroke="#a98a2c" stroke-width="1"/><path d="M496.5,106.5 L503.5,106.5" stroke="#fff" stroke-width="2"/><path d="M496.5,106.5 L489.5,106.5" stroke="#fff" stroke-width="2"/><path d="M496.5,106.5 L500.0,112.6" stroke="#fff" stroke-width="2"/><path d="M496.5,106.5 L493.0,112.6" stroke="#fff" stroke-width="2"/><path d="M496.5,106.5 L500.0,100.4" stroke="#fff" stroke-width="2"/><path d="M496.5,106.5 L493.0,100.4" stroke="#fff" stroke-width="2"/><circle cx="496.5" cy="106.5" r="3.6" fill="#fff"/><circle cx="496.5" cy="106.5" r="1.5" fill="#c6a33c"/>
<rect x="524" y="75" width="2" height="37" fill="#d2d2d2"/>
<rect x="554" y="74" width="20" height="14" fill="#ececec" stroke="#888" stroke-width="2"/>
<rect x="545" y="83" width="39" height="21" rx="5" fill="#6c98cb" stroke="#40689a" stroke-width="2"/>
<rect x="554" y="95" width="20" height="19" fill="#f4f4f4" stroke="#888" stroke-width="2"/><path d="M558,101 H570 M558,105 H570 M558,109 H570" stroke="#999" stroke-width="1.4"/>
<path d="M609,70 H631 L640,79 V113 H609 Z" fill="#fff" stroke="#777" stroke-width="2"/><path d="M631,70 V79 H640" fill="none" stroke="#777" stroke-width="1.6"/>
<rect x="611" y="85" width="26" height="18" fill="#5aaee8" stroke="#555" stroke-width="1"/><path d="M612,94 L622,90 L636,98 V102 H612Z" fill="#c0a84a"/>
<rect x="632" y="96" width="22" height="22" rx="4" fill="#3d5a72"/><path d="M642,101 H637 V113 H642" fill="none" stroke="#fff" stroke-width="2.4"/><path d="M640,107 H650 M646,103 L650,107 L646,111" fill="none" stroke="#fff" stroke-width="2"/>
<path d="M675,70 H697 L706,79 V113 H675 Z" fill="#fff" stroke="#777" stroke-width="2"/><path d="M697,70 V79 H706" fill="none" stroke="#777" stroke-width="1.6"/>
<g stroke="#f7931e" stroke-width="3" stroke-linecap="round"><path d="M690,82 V102 M681,87 L699,97 M699,87 L681,97"/></g>
<rect x="698" y="96" width="22" height="22" rx="4" fill="#3d5a72"/><path d="M708,101 H703 V113 H708" fill="none" stroke="#fff" stroke-width="2.4"/><path d="M706,107 H716 M712,103 L716,107 L712,111" fill="none" stroke="#fff" stroke-width="2"/>
<path d="M741,70 H763 L772,79 V113 H741 Z" fill="#fff" stroke="#777" stroke-width="2"/><path d="M763,70 V79 H772" fill="none" stroke="#777" stroke-width="1.6"/>
<path d="M744,106 Q752,96 756,84 Q758,78 756,80 Q754,86 760,96 Q764,102 770,101 Q760,98 748,104Z" fill="none" stroke="#e02020" stroke-width="1.6"/>
<rect x="764" y="96" width="22" height="22" rx="4" fill="#3d5a72"/><path d="M774,101 H769 V113 H774" fill="none" stroke="#fff" stroke-width="2.4"/><path d="M772,107 H782 M778,103 L782,107 L778,111" fill="none" stroke="#fff" stroke-width="2"/>
<path d="M812,92 L826,77 V86 Q846,86 846,100 Q846,111 832,112 L828,108 Q838,106 837,99 Q836,93 826,94 V103Z" fill="#e27a38" stroke="#c45e20" stroke-width="1"/>
<path d="M910,92 L896,77 V86 Q876,86 876,100 Q876,111 890,112 L894,108 Q884,106 885,99 Q886,93 896,94 V103Z" fill="#dcdedc" stroke="#c8cbc8" stroke-width="1"/>
<rect x="945" y="78.0" width="2.2" height="2.2" fill="#c4c4c4"/><rect x="951" y="78.0" width="2.2" height="2.2" fill="#c4c4c4"/><rect x="945" y="84.5" width="2.2" height="2.2" fill="#c4c4c4"/><rect x="951" y="84.5" width="2.2" height="2.2" fill="#c4c4c4"/><rect x="945" y="91.0" width="2.2" height="2.2" fill="#c4c4c4"/><rect x="951" y="91.0" width="2.2" height="2.2" fill="#c4c4c4"/><rect x="945" y="97.5" width="2.2" height="2.2" fill="#c4c4c4"/><rect x="951" y="97.5" width="2.2" height="2.2" fill="#c4c4c4"/><rect x="945" y="104.0" width="2.2" height="2.2" fill="#c4c4c4"/><rect x="951" y="104.0" width="2.2" height="2.2" fill="#c4c4c4"/><rect x="945" y="110.5" width="2.2" height="2.2" fill="#c4c4c4"/><rect x="951" y="110.5" width="2.2" height="2.2" fill="#c4c4c4"/>
<rect x="969" y="77" width="46" height="34" rx="8" fill="#e2e3e4" stroke="#c4c6c8" stroke-width="2"/><polygon points="971.1,83.2 980.3,82.2 984.3,85.3 981.3,88.3 977.2,89.4 975.1,87.3 972.1,86.3" fill="#bcbec0"/><polygon points="975.1,87.3 982.3,88.3 979.2,92.5 977.2,90.4" fill="#bcbec0"/><polygon points="977.2,94.5 982.3,96.6 981.3,102.7 979.2,106.9 978.2,101.7" fill="#bcbec0"/><polygon points="988.4,82.2 994.6,81.1 997.6,84.2 992.5,85.3" fill="#bcbec0"/><polygon points="988.4,89.4 994.6,88.3 997.6,92.5 995.6,98.6 993.5,102.7 990.5,96.6 988.4,93.5" fill="#bcbec0"/><polygon points="997.6,81.1 1010.9,82.2 1012.9,85.3 1006.8,87.3 1002.7,91.4 998.6,87.3" fill="#bcbec0"/><polygon points="1006.8,101.7 1012.9,100.7 1012.9,104.8 1007.8,104.8" fill="#bcbec0"/><path d="M983.3,78 V110 M999.7,78 V110 M970,86.3 H1014 M970,100.7 H1014" stroke="#f4f4f4" stroke-width="1.4"/>
<rect x="1039" y="73" width="5" height="41" fill="#d3d7da" stroke="#c2c5c8" stroke-width="1.6"/><path d="M1046,94 L1062,76 V86 H1078 V102 H1062 V112Z" fill="#d3d7da" stroke="#c2c5c8" stroke-width="1.6"/>
<path d="M1106,94 L1124,76 V86 H1141 V102 H1124 V112Z" fill="#d3d7da" stroke="#c2c5c8" stroke-width="1.6"/>
<path d="M1378,94 L1360,76 V86 H1343 V102 H1360 V112Z" fill="#d3d7da" stroke="#c2c5c8" stroke-width="1.6"/>
<rect x="1440" y="73" width="5" height="41" fill="#d3d7da" stroke="#c2c5c8" stroke-width="1.6"/><path d="M1438,94 L1422,76 V86 H1406 V102 H1422 V112Z" fill="#d3d7da" stroke="#c2c5c8" stroke-width="1.6"/>
<rect x="1159.5" y="65" width="165.5" height="58" rx="5" fill="#ececec" stroke="#a8a8a8" stroke-width="1.5"/>
<rect x="1161.5" y="67" width="122" height="54" fill="#fff"/>
<rect x="1283.5" y="66" width="1.5" height="56" fill="#bdbdbd"/>
<path d="M1295,89 L1311,89 L1303,98Z" fill="#a8a8a8"/>
<text x="1166" y="105" font-size="27" fill="#b0b0b0" font-family="Liberation Sans">1</text>
<rect x="1481" y="74" width="20" height="13" fill="#f0f0f0" stroke="#cfcfcf" stroke-width="2"/><rect x="1472" y="83" width="40" height="20" rx="5" fill="#d8d8d8" stroke="#c8c8c8" stroke-width="1.5"/><rect x="1481" y="95" width="20" height="19" fill="#f4f4f4" stroke="#cfcfcf" stroke-width="2"/>
<path d="M1536,70 H1558 L1567,79 V113 H1536 Z" fill="#fff" stroke="#d0d0d0" stroke-width="2"/><path d="M1558,70 V79 H1567" fill="none" stroke="#d0d0d0" stroke-width="1.6"/>
<rect x="1538" y="86" width="26" height="18" fill="#dfe3e6"/>
<rect x="1559" y="96" width="22" height="22" rx="4" fill="#c4c8cc"/><path d="M1569,101 H1564 V113 H1569" fill="none" stroke="#fff" stroke-width="2.4"/><path d="M1567,107 H1577 M1573,103 L1577,107 L1573,111" fill="none" stroke="#fff" stroke-width="2"/>
<path d="M1595,89.5 L1610,89.5 L1602.5,99Z" fill="#444"/>
<rect x="1625" y="72" width="40" height="32" rx="8" fill="#b4cce8" stroke="#7598c4" stroke-width="2"/><polygon points="1626.7,77.8 1634.7,76.8 1638.3,79.7 1635.6,82.7 1632.0,83.6 1630.3,81.7 1627.6,80.7" fill="#4d6e98"/><polygon points="1630.3,81.7 1636.5,82.7 1633.8,86.5 1632.0,84.6" fill="#4d6e98"/><polygon points="1632.0,88.5 1636.5,90.4 1635.6,96.3 1633.8,100.1 1632.9,95.3" fill="#4d6e98"/><polygon points="1641.9,76.8 1647.2,75.9 1649.9,78.8 1645.4,79.7" fill="#4d6e98"/><polygon points="1641.9,83.6 1647.2,82.7 1649.9,86.5 1648.1,92.4 1646.3,96.3 1643.7,90.4 1641.9,87.5" fill="#4d6e98"/><polygon points="1649.9,75.9 1661.5,76.8 1663.3,79.7 1658.0,81.7 1654.4,85.6 1650.8,81.7" fill="#4d6e98"/><polygon points="1658.0,95.3 1663.3,94.3 1663.3,98.2 1658.9,98.2" fill="#4d6e98"/><path d="M1637.4,73 V103 M1651.7,73 V103 M1626,80.7 H1664 M1626,94.3 H1664" stroke="#e4eef8" stroke-width="1.4"/>
<path d="M1647,89 L1668,114" stroke="#333" stroke-width="7.5" stroke-linecap="round"/><path d="M1654.3,97.8 L1668,114" stroke="#ead27a" stroke-width="4.2" stroke-linecap="round"/><circle cx="1667.2" cy="113.0" r="1.6" fill="#333"/><g transform="translate(1647,89) rotate(50.0)"><circle cx="0" cy="0" r="8" fill="#e8e8e8" stroke="#333" stroke-width="1.6"/><rect x="-10" y="-3" width="10" height="6" fill="#aac4e4"/><path d="M-7.5,-3 H-1 V3 H-7.5" fill="none" stroke="#333" stroke-width="1.4"/></g>
<rect x="12" y="155.0" width="2.2" height="2.2" fill="#c4c4c4"/><rect x="18" y="155.0" width="2.2" height="2.2" fill="#c4c4c4"/><rect x="12" y="161.5" width="2.2" height="2.2" fill="#c4c4c4"/><rect x="18" y="161.5" width="2.2" height="2.2" fill="#c4c4c4"/><rect x="12" y="168.0" width="2.2" height="2.2" fill="#c4c4c4"/><rect x="18" y="168.0" width="2.2" height="2.2" fill="#c4c4c4"/><rect x="12" y="174.5" width="2.2" height="2.2" fill="#c4c4c4"/><rect x="18" y="174.5" width="2.2" height="2.2" fill="#c4c4c4"/><rect x="12" y="181.0" width="2.2" height="2.2" fill="#c4c4c4"/><rect x="18" y="181.0" width="2.2" height="2.2" fill="#c4c4c4"/><rect x="12" y="187.5" width="2.2" height="2.2" fill="#c4c4c4"/><rect x="18" y="187.5" width="2.2" height="2.2" fill="#c4c4c4"/>
<path d="M53.5,177.6 L40.5,190.6" stroke="#444" stroke-width="7" stroke-linecap="butt"/><path d="M51.5,179.6 L41.5,189.6" stroke="#f2c84b" stroke-width="3.6"/><circle cx="53.5" cy="177.6" r="2.6" fill="#111"/><circle cx="65" cy="166" r="16.5" fill="#ececec" stroke="#707070" stroke-width="2.2"/><path d="M65,155 V177 M54,166 H76" stroke="#5d8fc8" stroke-width="5" stroke-linecap="round"/>
<path d="M119.5,177.6 L106.5,190.6" stroke="#444" stroke-width="7" stroke-linecap="butt"/><path d="M117.5,179.6 L107.5,189.6" stroke="#f2c84b" stroke-width="3.6"/><circle cx="119.5" cy="177.6" r="2.6" fill="#111"/><circle cx="131" cy="166" r="16.5" fill="#ececec" stroke="#707070" stroke-width="2.2"/><path d="M120,166 H142" stroke="#5d8fc8" stroke-width="5" stroke-linecap="round"/>
<rect x="173" y="153" width="22" height="26" fill="#ececec" stroke="#888" stroke-width="2"/>
<path d="M185.4,177.6 L172.4,190.6" stroke="#444" stroke-width="7" stroke-linecap="butt"/><path d="M183.4,179.6 L173.4,189.6" stroke="#f2c84b" stroke-width="3.6"/><circle cx="185.4" cy="177.6" r="2.6" fill="#111"/><circle cx="197" cy="166" r="16.5" fill="#ececec" stroke="#707070" stroke-width="2.2"/><text x="185" y="174" font-size="17" font-weight="bold" fill="#222" font-family="Liberation Sans">1:1</text>
<path d="M251.5,177.5 L238.5,190.5" stroke="#444" stroke-width="7" stroke-linecap="butt"/><path d="M249.5,179.5 L239.5,189.5" stroke="#f2c84b" stroke-width="3.6"/><circle cx="251.5" cy="177.5" r="2.6" fill="#111"/><circle cx="262" cy="167" r="15" fill="#ececec" stroke="#707070" stroke-width="2.2"/>
<g fill="#6a98cc" stroke="#3d5f85" stroke-width="1.8" stroke-linejoin="miter"><path d="M242,148.5 H257.5 L252,154 L258.5,160.5 L252.5,166 L246.5,160 L242,164.5Z"/><path d="M242,148.5 H257.5 L252,154 L258.5,160.5 L252.5,166 L246.5,160 L242,164.5Z" transform="translate(523.5,0) scale(-1,1)"/><path d="M242,148.5 H257.5 L252,154 L258.5,160.5 L252.5,166 L246.5,160 L242,164.5Z" transform="translate(523.5,337) scale(-1,-1)"/></g>
<defs><linearGradient id="rg" x1="0" y1="0" x2="1" y2="1"><stop offset="0" stop-color="#9cc0ea"/><stop offset="1" stop-color="#3f7dc4"/></linearGradient></defs>
<path d="M303.8,170 C303.5,158 312,150 323,150 C331,150 337,153 341,156.5 L343.7,151.3 L343.7,170.7 L326.9,170.7 L333.5,164.5 C329,160.5 323,158.5 318,159.2 C313,160 311,164 311.5,168.5 Z" fill="url(#rg)" stroke="#2f65a8" stroke-width="1"/>
<path d="M303.8,170 C303.5,158 312,150 323,150 C331,150 337,153 341,156.5 L343.7,151.3 L343.7,170.7 L326.9,170.7 L333.5,164.5 C329,160.5 323,158.5 318,159.2 C313,160 311,164 311.5,168.5 Z" transform="rotate(180 323.75 172)" fill="url(#rg)" stroke="#2f65a8" stroke-width="1"/>
<rect x="374" y="155.0" width="2.2" height="2.2" fill="#c4c4c4"/><rect x="380" y="155.0" width="2.2" height="2.2" fill="#c4c4c4"/><rect x="374" y="161.5" width="2.2" height="2.2" fill="#c4c4c4"/><rect x="380" y="161.5" width="2.2" height="2.2" fill="#c4c4c4"/><rect x="374" y="168.0" width="2.2" height="2.2" fill="#c4c4c4"/><rect x="380" y="168.0" width="2.2" height="2.2" fill="#c4c4c4"/><rect x="374" y="174.5" width="2.2" height="2.2" fill="#c4c4c4"/><rect x="380" y="174.5" width="2.2" height="2.2" fill="#c4c4c4"/><rect x="374" y="181.0" width="2.2" height="2.2" fill="#c4c4c4"/><rect x="380" y="181.0" width="2.2" height="2.2" fill="#c4c4c4"/><rect x="374" y="187.5" width="2.2" height="2.2" fill="#c4c4c4"/><rect x="380" y="187.5" width="2.2" height="2.2" fill="#c4c4c4"/>
<rect x="402.5" y="154.5" width="25" height="23" fill="#c8e4f8" stroke="#4d6d8a" stroke-width="1.8"/>
<path d="M420,175 V166 A9,9 0 0 1 438,166 V175" fill="none" stroke="#8a8a8a" stroke-width="4"/><path d="M420,175 V166 A9,9 0 0 1 438,166 V175" fill="none" stroke="#e8e8e8" stroke-width="1.5"/>
<rect x="414.5" y="174.5" width="29" height="19" rx="2.5" fill="#f2d750" stroke="#cfa92c" stroke-width="1.6"/>
<rect x="469" y="160" width="22" height="22" fill="#c8e4f8" stroke="#4d6d8a" stroke-width="1.8"/><circle cx="492" cy="163" r="12" fill="#c8e4f8" stroke="#4d6d8a" stroke-width="1.8"/>
<path d="M505,175 V168 A8,8 0 1 0 490,166" fill="none" stroke="#8a8a8a" stroke-width="4"/>
<rect x="480.5" y="174.5" width="29" height="19" rx="2.5" fill="#f2d750" stroke="#cfa92c" stroke-width="1.6"/>
<rect x="539" y="169" width="25" height="19" fill="#c8e4f8" stroke="#4d6d8a" stroke-width="1.8"/><circle cx="559" cy="167" r="12" fill="#c8e4f8" stroke="#4d6d8a" stroke-width="1.8"/>
<rect x="534" y="152" width="4" height="4" fill="#000"/><rect x="570" y="152" width="4" height="4" fill="#000"/><rect x="534" y="188" width="4" height="4" fill="#000"/><rect x="570" y="188" width="4" height="4" fill="#000"/>
<rect x="605" y="169" width="25" height="19" fill="#f2eea0" stroke="#8a8a8a" stroke-width="1.8"/><circle cx="624" cy="167" r="12" fill="#c8e4f8" stroke="#4d6d8a" stroke-width="1.8"/>
<rect x="600" y="152" width="4" height="4" fill="#000"/><rect x="637" y="152" width="4" height="4" fill="#000"/><rect x="600" y="188" width="4" height="4" fill="#000"/><rect x="630" y="188" width="4" height="4" fill="#000"/><rect x="600" y="164" width="4" height="4" fill="#000"/><rect x="637" y="179" width="4" height="4" fill="#000"/><rect x="609" y="179" width="4" height="4" fill="#000"/>
<rect x="666.5" y="168.5" width="30" height="22" fill="#c8e4f8" stroke="#88a8c0" stroke-width="1.8"/><rect x="674.5" y="152.5" width="31" height="22" fill="#f2eea0" stroke="#8a8a8a" stroke-width="1.8"/><path d="M708,191 L722,191 L715,198Z" fill="#555"/>
<rect x="732" y="150" width="2.4" height="44" fill="#333"/><rect x="734.5" y="152.5" width="20" height="16" fill="#c8f4c8" stroke="#7cb87c" stroke-width="1.8"/><rect x="734.5" y="172.5" width="27" height="18" fill="#c8e4f8" stroke="#88a8c0" stroke-width="1.8"/><path d="M772,191 L786,191 L779,198Z" fill="#555"/>
<path d="M797,152 V164 M815,152 V164 M833,152 V164" stroke="#333" stroke-width="2.4"/><rect x="797.5" y="162.5" width="9" height="20" fill="#c8f4c8" stroke="#7cb87c" stroke-width="1.6"/><rect x="814.5" y="162.5" width="12" height="28" fill="#c8e4f8" stroke="#88a8c0" stroke-width="1.6"/><rect x="832.5" y="162.5" width="9" height="16" fill="#c8f4c8" stroke="#7cb87c" stroke-width="1.6"/><path d="M836,191 L850,191 L843,198Z" fill="#555"/>
<rect x="864.5" y="153" width="23" height="38" fill="#c8e4f8" stroke="#88a8c0" stroke-width="1.8"/><rect x="892.5" y="153" width="11" height="38" fill="#f2eea0" stroke="#8a8a8a" stroke-width="1.8"/><path d="M866,172 H874 M871,168 L875,172 L871,176 M886,172 H878 M881,168 L877,172 L881,176" fill="none" stroke="#333" stroke-width="1.8"/><path d="M898,191 L912,191 L905,198Z" fill="#555"/>
</svg>
<svg class="a" style="left:0;top:210px" width="80" height="1030">
<g transform="translate(0,-210)"><rect x="28.0" y="222" width="2.2" height="2.2" fill="#c4c4c4"/><rect x="28.0" y="228" width="2.2" height="2.2" fill="#c4c4c4"/><rect x="34.3" y="222" width="2.2" height="2.2" fill="#c4c4c4"/><rect x="34.3" y="228" width="2.2" height="2.2" fill="#c4c4c4"/><rect x="40.6" y="222" width="2.2" height="2.2" fill="#c4c4c4"/><rect x="40.6" y="228" width="2.2" height="2.2" fill="#c4c4c4"/><rect x="46.9" y="222" width="2.2" height="2.2" fill="#c4c4c4"/><rect x="46.9" y="228" width="2.2" height="2.2" fill="#c4c4c4"/><rect x="53.2" y="222" width="2.2" height="2.2" fill="#c4c4c4"/><rect x="53.2" y="228" width="2.2" height="2.2" fill="#c4c4c4"/><rect x="59.5" y="222" width="2.2" height="2.2" fill="#c4c4c4"/><rect x="59.5" y="228" width="2.2" height="2.2" fill="#c4c4c4"/></g>
<g transform="translate(0,-210)"><path d="M33,272 Q28,264 24,266 Q22,270 28,279 Q33,287 40,289 H54 Q60,283 60,272 V258 Q60,254 57,254 Q54,254 54,258 V266 V254 Q54,250 50,250 Q47,250 47,254 V266 V250 Q47,245 43,245 Q39,245 39,250 V266 V256 Q39,252 36,252 Q33,252 33,256Z" fill="#fff" stroke="#111" stroke-width="2.2" stroke-linejoin="round"/></g>
<g transform="translate(0,-210)"><rect x="20" y="311" width="26" height="26" fill="none" stroke="#111" stroke-width="2.4" stroke-dasharray="4,3"/></g>
<g transform="translate(0,-210)"><path d="M36.1,336.9 L23.1,349.9" stroke="#444" stroke-width="7" stroke-linecap="butt"/><path d="M34.1,338.9 L24.1,348.9" stroke="#f2c84b" stroke-width="3.6"/><circle cx="36.1" cy="336.9" r="2.6" fill="#111"/><circle cx="48" cy="325" r="17" fill="#ececec" stroke="#707070" stroke-width="2.2"/></g>
<g transform="translate(0,-210)"><rect x="10.8" y="367.5" width="62" height="59" rx="5" fill="#dcdcdc" stroke="#b2b2b2" stroke-width="1.6"/></g>
<g transform="translate(0,-210)"><rect x="24" y="378" width="33" height="33" fill="none" stroke="#666" stroke-width="1.5" stroke-dasharray="2,4"/></g>
<g transform="translate(0,-210)"><rect x="21" y="375" width="7" height="7" fill="#dcdcdc" stroke="#666" stroke-width="1.5"/><rect x="51" y="375" width="7" height="7" fill="#dcdcdc" stroke="#666" stroke-width="1.5"/><rect x="21" y="406" width="7" height="7" fill="#dcdcdc" stroke="#666" stroke-width="1.5"/><rect x="51" y="406" width="7" height="7" fill="#dcdcdc" stroke="#666" stroke-width="1.5"/></g>
<g transform="translate(0,-210)"><path d="M28.5,376.5 L28.5,410 L36.5,403 L43.5,419 L50,416 L43,400.5 L54,400.5Z" fill="#fff" stroke="#111" stroke-width="2.4" stroke-linejoin="round"/></g>
<g transform="translate(0,-210)"><rect x="26" y="439" width="35" height="40" fill="#efefef" stroke="#888" stroke-width="1.5"/><path d="M26,443 Q22,440 24,439 Q28,437 30,440 V478 Q22,480 22,474Z" fill="#dcdcdc" stroke="#888" stroke-width="1.5"/></g>
<g transform="translate(0,-210)"><path d="M46,445 L56,455 H50 V462 H42 V455 H36Z" fill="#5d8fc8" stroke="#3f6a9e" stroke-width="1"/><rect x="32" y="462" width="6" height="10" fill="#5d8fc8"/><rect x="55" y="464" width="6" height="6" fill="#5d8fc8"/><rect x="44" y="472" width="6" height="6" fill="#5d8fc8"/></g>
<g transform="translate(0,-210)"><path d="M34,505 L59,518 M34,505 L25,540" stroke="#111" stroke-width="2.4"/><path d="M25,540 L48,530" stroke="#111" stroke-width="2" stroke-dasharray="3,2"/></g>
<g transform="translate(0,-210)"><path d="M42,540 L58,522" stroke="#d8d8d8" stroke-width="5"/><path d="M45,526 L63,544" stroke="#c88a2a" stroke-width="5"/><path d="M40,545 L55,528" stroke="#f2c84b" stroke-width="5"/></g>
<g transform="translate(0,-210)"><circle cx="34" cy="505" r="5" fill="#2f8ae6"/><circle cx="59" cy="518" r="5" fill="#2f8ae6"/><circle cx="25" cy="540" r="5" fill="#2f8ae6"/></g>
<g transform="translate(0,-210)"><path d="M26,567 H61 V606 H26Z" fill="#e4e4e4" stroke="#999" stroke-width="1.6"/><path d="M22,571 Q22,566 26,566 Q30,566 30,571 V606 H26 Q22,606 22,601Z" fill="#d6d6d6" stroke="#999" stroke-width="1.6"/></g>
<g transform="translate(0,-210)"><rect x="48" y="594" width="18" height="18" rx="3.5" fill="#5b9860" stroke="#47804c" stroke-width="1"/><path d="M57.0,597.5 V608.5 M51.5,603.0 H62.5" stroke="#fff" stroke-width="3.6"/></g>
<g transform="translate(0,-210)"><path d="M21,657 L33,640 L46,636 L61,637 L59,662 L40,664Z" fill="#d8d8d8" stroke="#aaa" stroke-width="1.6"/><path d="M30,648 L58,645 M26,656 L58,654 M38,638 L35,664 M50,636 L48,663" stroke="#b8b8b8" stroke-width="1.2"/></g>
<g transform="translate(0,-210)"><rect x="48" y="658" width="18" height="18" rx="3.5" fill="#5b9860" stroke="#47804c" stroke-width="1"/><path d="M57.0,661.5 V672.5 M51.5,667.0 H62.5" stroke="#fff" stroke-width="3.6"/></g>
<g transform="translate(0,-210)"><defs><linearGradient id="sky" x1="0" y1="0" x2="0" y2="1"><stop offset="0" stop-color="#4aa0ea"/><stop offset="1" stop-color="#b8dcf6"/></linearGradient><linearGradient id="sand" x1="0" y1="0" x2="0" y2="1"><stop offset="0" stop-color="#d8c888"/><stop offset="1" stop-color="#a89038"/></linearGradient></defs></g>
<g transform="translate(0,-210)"><rect x="23" y="703" width="38" height="27" fill="url(#sky)" stroke="#8a8a8a" stroke-width="2"/><path d="M24,716 L38,710 L60,720 V729 H24Z" fill="url(#sand)"/></g>
<g transform="translate(0,-210)"><rect x="48" y="722" width="18" height="18" rx="3.5" fill="#5b9860" stroke="#47804c" stroke-width="1"/><path d="M57.0,725.5 V736.5 M51.5,731.0 H62.5" stroke="#fff" stroke-width="3.6"/></g>
<g transform="translate(0,-210)"><rect x="23" y="767" width="38" height="26" fill="#efefef" stroke="#8a8a8a" stroke-width="2"/><path d="M34,774 H50 M42,774 V788 M39,788 H45" stroke="#333" stroke-width="2"/></g>
<g transform="translate(0,-210)"><rect x="48" y="786" width="18" height="18" rx="3.5" fill="#5b9860" stroke="#47804c" stroke-width="1"/><path d="M57.0,789.5 V800.5 M51.5,795.0 H62.5" stroke="#fff" stroke-width="3.6"/></g>
<g transform="translate(0,-210)"><rect x="24.5" y="826.5" width="9" height="9" fill="#ffd54a" stroke="#f09030" stroke-width="1.4"/><rect x="24.5" y="838.5" width="9" height="9" fill="#f04a20" stroke="#b02a10" stroke-width="1.4"/><rect x="24.5" y="850.5" width="9" height="9" fill="#4cb84c" stroke="#1f5f2a" stroke-width="1.4"/></g>
<g transform="translate(0,-210)"><rect x="36" y="829.5" width="12" height="3" fill="#a4a4a4"/><rect x="36" y="841.5" width="18" height="3" fill="#a4a4a4"/><rect x="36" y="853.5" width="8" height="3" fill="#a4a4a4"/></g>
<g transform="translate(0,-210)"><rect x="48" y="850" width="18" height="18" rx="3.5" fill="#5b9860" stroke="#47804c" stroke-width="1"/><path d="M57.0,853.5 V864.5 M51.5,859.0 H62.5" stroke="#fff" stroke-width="3.6"/></g>
<g transform="translate(0,-210)"><rect x="9.5" y="875" width="69.5" height="63.5" fill="none" stroke="#e8412a" stroke-width="4"/></g>
<g transform="translate(0,-210)"><rect x="20" y="902" width="44" height="7" fill="#4a4a4a"/><rect x="26" y="904" width="7" height="3" fill="#fff"/><rect x="43" y="904" width="7" height="3" fill="#fff"/></g>
<g transform="translate(0,-210)"><rect x="48" y="914" width="18" height="18" rx="3.5" fill="#5b9860" stroke="#47804c" stroke-width="1"/><path d="M57.0,917.5 V928.5 M51.5,923.0 H62.5" stroke="#fff" stroke-width="3.6"/></g>
<g transform="translate(0,-210)"><path d="M42,951 L26.5,993 L42,982 L51,988Z" fill="#5a86c2" stroke="#2f4f80" stroke-width="1.6" stroke-linejoin="round"/><text x="35" y="977" font-size="14" font-weight="bold" fill="#fff" font-family="Liberation Sans">N</text></g>
<g transform="translate(0,-210)"><rect x="48" y="976" width="18" height="18" rx="3.5" fill="#5b9860" stroke="#47804c" stroke-width="1"/><path d="M57.0,979.5 V990.5 M51.5,985.0 H62.5" stroke="#fff" stroke-width="3.6"/></g>
<g transform="translate(0,-210)"><rect x="22.5" y="1032" width="16" height="20" fill="#c8e4f8" stroke="#88a8c0" stroke-width="1.6"/><circle cx="50" cy="1036" r="11.5" fill="#f8b8b8" stroke="#d88080" stroke-width="1.6"/><path d="M27,1038.5 L40.5,1014.5 L54,1038.5Z" fill="#b8f0b0" stroke="#5aa05a" stroke-width="1.6"/></g>
<g transform="translate(0,-210)"><rect x="48" y="1043" width="18" height="18" rx="3.5" fill="#5b9860" stroke="#47804c" stroke-width="1"/><path d="M57.0,1046.5 V1057.5 M51.5,1052.0 H62.5" stroke="#fff" stroke-width="3.6"/><path d="M58,1054 L69,1054 L63.5,1060Z" fill="#111"/></g>
<g transform="translate(0,-210)"><path d="M42,1080 L47,1093 L61,1094 L50,1103 L54,1118 L42,1110 L30,1118 L34,1103 L23,1094 L37,1093Z" fill="#f9e8a8" stroke="#e0a058" stroke-width="1.8" stroke-linejoin="round"/></g>
<g transform="translate(0,-210)"><rect x="48" y="1106" width="18" height="18" rx="3.5" fill="#5b9860" stroke="#47804c" stroke-width="1"/><path d="M57.0,1109.5 V1120.5 M51.5,1115.0 H62.5" stroke="#fff" stroke-width="3.6"/></g>
<g transform="translate(0,-210)"><path d="M25,1180 L58,1147" stroke="#333" stroke-width="2.2"/><path d="M61,1144 L46,1148 L57,1159Z" fill="#fff" stroke="#333" stroke-width="2.2" stroke-linejoin="round"/><rect x="22" y="1176" width="6" height="6" fill="#333"/></g>
<g transform="translate(0,-210)"><rect x="48" y="1170" width="18" height="18" rx="3.5" fill="#5b9860" stroke="#47804c" stroke-width="1"/><path d="M57.0,1173.5 V1184.5 M51.5,1179.0 H62.5" stroke="#fff" stroke-width="3.6"/></g>
<g transform="translate(0,-210)"><path d="M36,1217 L42,1222 L48,1217 M36,1226 L42,1231 L48,1226" fill="none" stroke="#333" stroke-width="2"/></g>
</svg>
<svg class="a" style="left:80px;top:890px" width="90" height="34"><path d="M8,16.7 L30,5 V14 H82 V19.5 H30 V28Z" fill="#e8412a"/></svg>
<div class="t" style="left:1631px;top:218.7px;font-size:22px;line-height:25.3px;height:25.3px;letter-spacing:0.4px;font-weight:normal;color:#1d1d1d;">Items</div>
<svg class="a" style="left:2250px;top:220px" width="54" height="24">
<rect x="3" y="1" width="20" height="21" rx="3" fill="none" stroke="#5a5a5a" stroke-width="2"/>
<rect x="8" y="10" width="8" height="8" fill="none" stroke="#5a5a5a" stroke-width="2"/>
<path d="M12,10 V6 H19 V14 H16" fill="none" stroke="#5a5a5a" stroke-width="2"/>
<rect x="31" y="1" width="20" height="21" rx="3" fill="none" stroke="#5a5a5a" stroke-width="2"/>
<path d="M35.5,5.5 L46.5,17.5 M46.5,5.5 L35.5,17.5" stroke="#5a5a5a" stroke-width="3.6"/>
</svg>
<div class="a" style="left:1622px;top:250px;width:683px;height:251px;background:#fff;border:1.5px solid #b8b8b8"></div>
<div class="a" style="left:1623px;top:251px;width:681px;height:38px;background:linear-gradient(#f8f8f8,#e8e8e8)"></div>
<div class="a" style="left:1623px;top:289px;width:681px;height:2.5px;background:#b3b3b3"></div>
<div class="a" style="left:1677px;top:252px;width:2px;height:37px;background:#cdcdcd"></div>
<div class="a" style="left:1733px;top:252px;width:2px;height:37px;background:#cdcdcd"></div>
<svg class="a" style="left:1627px;top:258px" width="36" height="24">
<path d="M3,12 Q16,-2 32,11 Q17,24 3,12Z" fill="#fff" stroke="#8a8a8a" stroke-width="1.4"/>
<path d="M2,5 Q16,-1 28,5" fill="none" stroke="#8a8a8a" stroke-width="1.2"/>
<circle cx="16" cy="11" r="7" fill="#a6a6a6" stroke="#777" stroke-width="1.2"/>
<circle cx="16" cy="10" r="3.2" fill="#111"/><circle cx="15" cy="9" r="1.2" fill="#fff"/></svg>
<svg class="a" style="left:1686px;top:256px" width="28" height="32">
<path d="M6,14 V9 A8,8 0 0 1 22,9 V14" fill="none" stroke="#8a8a8a" stroke-width="3.2"/>
<rect x="3.5" y="13.5" width="21" height="16" rx="3" fill="#6b6b6b"/></svg>
<div class="t" style="left:1741px;top:258.3px;font-size:24.5px;line-height:28.2px;height:28.2px;letter-spacing:0.6px;font-weight:normal;color:#1d1d1d;">Item</div>
<div class="a" style="left:1623px;top:364px;width:681px;height:36px;background:#dcdcdc"></div>
<div class="a" style="left:1630px;top:296.5px;width:27px;height:27px;background:#fff;border:2px solid #b5b5b5;border-radius:2px"></div><svg class="a" style="left:1630px;top:296.5px" width="27" height="27"><path d="M6,14 L12,22 L20.5,5.5" fill="none" stroke="#000" stroke-width="3.6" stroke-linejoin="miter"/></svg>
<div class="a" style="left:1686px;top:296.5px;width:27px;height:27px;background:#fff;border:2px solid #b5b5b5;border-radius:2px"></div>
<div class="a" style="left:1630px;top:332.5px;width:27px;height:27px;background:#fff;border:2px solid #b5b5b5;border-radius:2px"></div><svg class="a" style="left:1630px;top:332.5px" width="27" height="27"><path d="M6,14 L12,22 L20.5,5.5" fill="none" stroke="#000" stroke-width="3.6" stroke-linejoin="miter"/></svg>
<div class="a" style="left:1686px;top:332.5px;width:27px;height:27px;background:#fff;border:2px solid #b5b5b5;border-radius:2px"></div>
<div class="a" style="left:1630px;top:368.5px;width:27px;height:27px;background:#fff;border:2px solid #b5b5b5;border-radius:2px"></div><svg class="a" style="left:1630px;top:368.5px" width="27" height="27"><path d="M6,14 L12,22 L20.5,5.5" fill="none" stroke="#000" stroke-width="3.6" stroke-linejoin="miter"/></svg>
<div class="a" style="left:1686px;top:368.5px;width:27px;height:27px;background:#fff;border:2px solid #b5b5b5;border-radius:2px"></div>
<svg class="a" style="left:1743px;top:300px" width="32" height="92">
<rect x="1.5" y="6" width="27" height="8" fill="#9a9a9a"/><rect x="3" y="7.5" width="8" height="5" fill="#3f3f3f"/><rect x="19" y="7.5" width="8" height="5" fill="#3f3f3f"/><rect x="11" y="7.5" width="8" height="5" fill="#fff"/>
<rect x="1.5" y="33" width="7" height="7" fill="#bbb" stroke="#444" stroke-width="1.6"/><rect x="11" y="34" width="10" height="3" fill="#b0b0b0"/>
<rect x="1.5" y="42.5" width="7" height="7" fill="#bbb" stroke="#444" stroke-width="1.6"/><rect x="11" y="44.5" width="17" height="3" fill="#b0b0b0"/>
<rect x="1.5" y="52" width="7" height="7" fill="#bbb" stroke="#444" stroke-width="1.6"/><rect x="11" y="54" width="7" height="3" fill="#b0b0b0"/>
<defs><linearGradient id="mg" x1="0" x2="1"><stop offset="0" stop-color="#c8aeae"/><stop offset="1" stop-color="#ecdcdc"/></linearGradient></defs>
<rect x="3" y="74" width="25" height="23" fill="url(#mg)" stroke="#b19b9b" stroke-width="1.2"/><path d="M1.5,97 V73 Q1.5,71 4,71 Q6,71 6,73 V97" fill="#e6d6d6" stroke="#b19b9b" stroke-width="1.2"/></svg>
<div class="t" style="left:1787px;top:294.0px;font-size:25px;line-height:28.7px;height:28.7px;letter-spacing:1.2px;font-weight:bold;color:#000;">&lt;Scalebar&gt;</div>
<div class="t" style="left:1787px;top:330.4px;font-size:25px;line-height:28.7px;height:28.7px;letter-spacing:0.9px;font-weight:normal;color:#000;">&lt;Legend&gt;</div>
<div class="t" style="left:1787px;top:366.2px;font-size:25px;line-height:28.7px;height:28.7px;letter-spacing:0.5px;font-weight:normal;color:#000;">Map 1</div>
<svg class="a" style="left:1948px;top:505px" width="40" height="4"><rect x="0" y="0" width="2" height="2" fill="#9a9a9a"/><rect x="6" y="0" width="2" height="2" fill="#9a9a9a"/><rect x="12" y="0" width="2" height="2" fill="#9a9a9a"/><rect x="18" y="0" width="2" height="2" fill="#9a9a9a"/><rect x="24" y="0" width="2" height="2" fill="#9a9a9a"/><rect x="30" y="0" width="2" height="2" fill="#9a9a9a"/></svg>
<div class="t" style="left:1631px;top:520.9px;font-size:22px;line-height:25.3px;height:25.3px;letter-spacing:0.65px;font-weight:normal;color:#1d1d1d;">Item Properties</div>
<svg class="a" style="left:2250px;top:522px" width="54" height="24">
<rect x="3" y="1" width="20" height="21" rx="3" fill="none" stroke="#5a5a5a" stroke-width="2"/>
<rect x="8" y="10" width="8" height="8" fill="none" stroke="#5a5a5a" stroke-width="2"/>
<path d="M12,10 V6 H19 V14 H16" fill="none" stroke="#5a5a5a" stroke-width="2"/>
<rect x="31" y="1" width="20" height="21" rx="3" fill="none" stroke="#5a5a5a" stroke-width="2"/>
<path d="M35.5,5.5 L46.5,17.5 M46.5,5.5 L35.5,17.5" stroke="#5a5a5a" stroke-width="3.6"/>
</svg>
<div class="a" style="left:1622px;top:552px;width:683px;height:41px;background:#c8c8c8"></div>
<div class="t" style="left:1633px;top:558.3px;font-size:26px;line-height:29.9px;height:29.9px;letter-spacing:0.45px;font-weight:bold;color:#000;">Scalebar</div>
<div class="a" style="left:1622px;top:592px;width:683px;height:649px;background:#ebebeb;border:1.5px solid #c4c4c4;border-top:1.5px solid #b5b5b5"></div>
<svg class="a" style="left:1650px;top:618px" width="24" height="20"><path d="M1,1 L23,1 L12,18Z" fill="#3c3c3c"/></svg>
<div class="t" style="left:1690px;top:613.2px;font-size:25px;line-height:28.7px;height:28.7px;letter-spacing:0.9px;font-weight:bold;color:#000;">Units</div>
<div class="a" style="left:1648px;top:648px;width:612px;height:283px;background:#e6e6e6;border:1.5px solid #dadada;border-radius:3px"></div>
<div class="t" style="left:1674px;top:684.6px;font-size:25px;line-height:28.7px;height:28.7px;letter-spacing:0.88px;font-weight:normal;color:#1d1d1d;">Scalebar units</div>
<div class="a" style="left:1924px;top:674.5px;width:307px;height:47px;background:linear-gradient(#ffffff,#f0f0f0);border:1.5px solid #bdbdbd;border-radius:5px;box-shadow:0 1px 0 #cfcfcf"></div>
<div class="t" style="left:1935px;top:684.6px;font-size:25px;line-height:28.7px;height:28.7px;letter-spacing:0.9px;font-weight:normal;color:#1d1d1d;">Kilometers</div>
<svg class="a" style="left:2199px;top:690px" width="20" height="14"><path d="M1,2 L19,2 L10,12Z" fill="#555"/></svg>
<div class="t" style="left:1674px;top:746.4px;font-size:25px;line-height:28.7px;height:28.7px;letter-spacing:0.92px;font-weight:normal;color:#1d1d1d;">Label unit multiplier</div>
<div class="a" style="left:1924px;top:736.5px;width:307px;height:45px;background:#fff;border:1.5px solid #bdbdbd;border-radius:4px;box-shadow:0 1px 0 #d8d8d8"></div><div class="a" style="left:2200px;top:737.5px;width:30px;height:43px;background:linear-gradient(#f8f8f8,#ececec);border-left:2px solid #9a9a9a;border-radius:0 3px 3px 0"></div><svg class="a" style="left:2208px;top:745.0px" width="16" height="28"><path d="M2,10 L14,10 L8,3Z" fill="#555"/><path d="M2,17 L14,17 L8,24Z" fill="#555"/></svg><div class="t" style="left:1934px;top:745.4px;font-size:25px;line-height:28.7px;height:28.7px;letter-spacing:0.9px;font-weight:normal;color:#1d1d1d;">1.000000</div>
<div class="t" style="left:1674px;top:806.4px;font-size:25px;line-height:28.7px;height:28.7px;letter-spacing:0.88px;font-weight:normal;color:#1d1d1d;"><span style="text-decoration:underline;text-underline-offset:3px;text-decoration-thickness:1.5px">L</span>abel for units</div>
<div class="a" style="left:1924px;top:796.5px;width:307px;height:46.5px;background:#fff;border:1.5px solid #bdbdbd;border-radius:4px;box-shadow:0 1px 0 #d5d5d5"></div>
<div class="t" style="left:1930px;top:806.4px;font-size:25px;line-height:28.7px;height:28.7px;letter-spacing:0.9px;font-weight:normal;color:#1d1d1d;">km</div>
<div class="t" style="left:1674px;top:867.4px;font-size:25px;line-height:28.7px;height:28.7px;letter-spacing:0.9px;font-weight:normal;color:#1d1d1d;">Number format</div>
<div class="a" style="left:1924px;top:856.5px;width:307px;height:47px;background:linear-gradient(#ffffff,#f0f0f0);border:1.5px solid #bdbdbd;border-radius:5px;box-shadow:0 1px 0 #cfcfcf"></div>
<div class="t" style="left:1924px;width:307px;text-align:center;top:867px;font-size:25px;letter-spacing:0.9px;line-height:28px">Customize</div>
<svg class="a" style="left:1650px;top:953px" width="24" height="20"><path d="M1,1 L23,1 L12,18Z" fill="#3c3c3c"/></svg>
<div class="t" style="left:1690px;top:948.8px;font-size:25px;line-height:28.7px;height:28.7px;letter-spacing:0.9px;font-weight:bold;color:#000;">Segments</div>
<div class="a" style="left:1648px;top:984.5px;width:612px;height:227px;background:#e6e6e6;border:1.5px solid #dadada;border-bottom:none;border-radius:3px 3px 0 0"></div>
<div class="t" style="left:1674px;top:1021.9px;font-size:25px;line-height:28.7px;height:28.7px;letter-spacing:0.9px;font-weight:normal;color:#1d1d1d;">Segments</div>
<div class="a" style="left:2047px;top:1013px;width:184px;height:44px;background:#fff;border:1.5px solid #bdbdbd;border-radius:4px;box-shadow:0 1px 0 #d8d8d8"></div><div class="a" style="left:2200px;top:1014px;width:30px;height:42px;background:linear-gradient(#f8f8f8,#ececec);border-left:2px solid #9a9a9a;border-radius:0 3px 3px 0"></div><svg class="a" style="left:2208px;top:1021.0px" width="16" height="28"><path d="M2,10 L14,10 L8,3Z" fill="#555"/><path d="M2,17 L14,17 L8,24Z" fill="#a8a8a8"/></svg><div class="t" style="left:2057px;top:1021.4px;font-size:25px;line-height:28.7px;height:28.7px;letter-spacing:0.9px;font-weight:normal;color:#1d1d1d;">left 0</div>
<div class="a" style="left:2047px;top:1075px;width:184px;height:44px;background:#fff;border:1.5px solid #bdbdbd;border-radius:4px;box-shadow:0 1px 0 #d8d8d8"></div><div class="a" style="left:2200px;top:1076px;width:30px;height:42px;background:linear-gradient(#f8f8f8,#ececec);border-left:2px solid #9a9a9a;border-radius:0 3px 3px 0"></div><svg class="a" style="left:2208px;top:1083.0px" width="16" height="28"><path d="M2,10 L14,10 L8,3Z" fill="#555"/><path d="M2,17 L14,17 L8,24Z" fill="#555"/></svg><div class="t" style="left:2057px;top:1083.4px;font-size:25px;line-height:28.7px;height:28.7px;letter-spacing:0.9px;font-weight:normal;color:#1d1d1d;">right 2</div><svg class="a" style="left:2153px;top:1086px" width="27" height="21"><path d="M8,1 H25 V20 H8 L0,10.5Z" fill="#9a9a9a"/><path d="M11,5 L21,16 M21,5 L11,16" stroke="#fff" stroke-width="2.4"/></svg>
<div class="a" style="left:1674px;top:1144px;width:28px;height:28px;border-radius:50%;background:#fff;border:1.5px solid #b0b0b0"></div>
<div class="a" style="left:1682px;top:1152px;width:12px;height:12px;border-radius:50%;background:#333"></div>
<div class="t" style="left:1715px;top:1145.3px;font-size:25px;line-height:28.7px;height:28.7px;letter-spacing:0.9px;font-weight:normal;color:#1d1d1d;">Fi<span style="text-decoration:underline;text-underline-offset:3px;text-decoration-thickness:1.5px">x</span>ed width</div>
<div class="a" style="left:2047px;top:1137px;width:184px;height:43px;background:#fff;border:1.5px solid #bdbdbd;border-radius:4px;box-shadow:0 1px 0 #d8d8d8"></div><div class="a" style="left:2200px;top:1138px;width:30px;height:41px;background:linear-gradient(#f8f8f8,#ececec);border-left:2px solid #9a9a9a;border-radius:0 3px 3px 0"></div><svg class="a" style="left:2208px;top:1144.5px" width="16" height="28"><path d="M2,10 L14,10 L8,3Z" fill="#555"/><path d="M2,17 L14,17 L8,24Z" fill="#555"/></svg><div class="t" style="left:2057px;top:1144.9px;font-size:25px;line-height:28.7px;height:28.7px;letter-spacing:0.9px;font-weight:normal;color:#1d1d1d;">2.000000 u</div>
<div class="a" style="left:2047px;top:1199px;width:184px;height:12px;background:#fff;border:1.5px solid #bdbdbd;border-bottom:none;border-radius:4px 4px 0 0"></div>
<div class="a" style="left:1674px;top:1204px;width:28px;height:7px;border-radius:14px 14px 0 0;background:#fff;border:1.5px solid #b0b0b0;border-bottom:none"></div>
<div class="a" style="left:2276px;top:593px;width:28px;height:618px;background:#dedede;border-left:1px solid #cfcfcf"></div>
<div class="a" style="left:2277px;top:593px;width:27px;height:28px;background:linear-gradient(90deg,#fdfdfd,#f0f0f0);border-bottom:2px solid #d0d0d0"></div>
<div class="a" style="left:2277px;top:641px;width:27px;height:237px;background:linear-gradient(90deg,#fdfdfd,#f0f0f0);border-bottom:1px solid #cfcfcf;border-top:1px solid #d5d5d5"></div>
<div class="a" style="left:2277px;top:1184px;width:27px;height:27px;background:linear-gradient(90deg,#fdfdfd,#f0f0f0);border-top:2px solid #d0d0d0"></div>
<svg class="a" style="left:2276px;top:593px" width="28" height="618"><path d="M7,18 L21,18 L14,10Z" fill="#555"/><path d="M7,599 L21,599 L14,607Z" fill="#555"/></svg>
<div class="a" style="left:1623px;top:1211px;width:681px;height:29px;background:linear-gradient(#fdfdfd,#efefef);border-top:1px solid #cfcfcf"></div>
<div class="a" style="left:1650px;top:1212px;width:2px;height:28px;background:#d0d0d0"></div>
<div class="a" style="left:2242px;top:1212px;width:2px;height:28px;background:#d0d0d0"></div>
<div class="a" style="left:2246px;top:1212px;width:1px;height:28px;background:#d8d8d8"></div>
<div class="a" style="left:2276px;top:1212px;width:1px;height:28px;background:#d0d0d0"></div>
<svg class="a" style="left:1623px;top:1211px" width="681" height="29"><path d="M19,7 L19,22 L11,14.5Z" fill="#555"/><path d="M637,7 L637,22 L645,14.5Z" fill="#555"/></svg>
<svg class="a" style="left:1615px;top:713px" width="3" height="34"><rect x="0" y="0.0" width="2" height="2" fill="#a8a8a8"/><rect x="0" y="5.5" width="2" height="2" fill="#a8a8a8"/><rect x="0" y="11.0" width="2" height="2" fill="#a8a8a8"/><rect x="0" y="16.5" width="2" height="2" fill="#a8a8a8"/><rect x="0" y="22.0" width="2" height="2" fill="#a8a8a8"/><rect x="0" y="27.5" width="2" height="2" fill="#a8a8a8"/></svg>
<div class="a" style="left:1700px;top:1195px;width:400px;height:16px;overflow:hidden"><div class="t" style="left:15px;top:8px;font-size:25px;letter-spacing:0.9px;line-height:28px">Fixed segment width</div></div>
<div class="t" style="left:15px;top:1258.4px;font-size:25px;line-height:28.7px;height:28.7px;letter-spacing:0.72px;font-weight:normal;color:#1a1a1a;">1 item selected</div>
<div class="t" style="left:1154.5px;top:1259.4px;font-size:25px;line-height:28.7px;height:28.7px;letter-spacing:1.1px;font-weight:normal;color:#1a1a1a;">x: 295.81 mm</div>
<div class="t" style="left:1366.7px;top:1259.4px;font-size:25px;line-height:28.7px;height:28.7px;letter-spacing:0.55px;font-weight:normal;color:#1a1a1a;">y: 147.701 mm</div>
<div class="t" style="left:1578.8px;top:1259.4px;font-size:25px;line-height:28.7px;height:28.7px;letter-spacing:0.6px;font-weight:normal;color:#1a1a1a;">page: 1</div>
<div class="a" style="left:1790px;top:1250px;width:256px;height:45px;background:#fff;border:1.5px solid #bdbdbd;border-radius:5px"></div>
<div class="a" style="left:2003px;top:1251px;width:42px;height:43px;background:linear-gradient(#fbfbfb,#eeeeee);border-left:1px solid #cfcfcf;border-radius:0 4px 4px 0"></div>
<svg class="a" style="left:2014px;top:1266px" width="20" height="14"><path d="M1,2 L19,2 L10,12Z" fill="#555"/></svg>
<div class="t" style="left:1799px;top:1259.4px;font-size:25px;line-height:28.7px;height:28.7px;letter-spacing:0.9px;font-weight:normal;color:#111;">86.2%</div>
<div class="a" style="left:2062px;top:1267px;width:194px;height:8px;background:#dcdcdc;border:1px solid #b8b8b8;border-radius:4px"></div>
<div class="a" style="left:2062px;top:1267px;width:20px;height:8px;background:#3d8fe6;border:1px solid #2a70c0;border-radius:4px"></div>
<div class="a" style="left:2074px;top:1258px;width:24px;height:26px;background:linear-gradient(#ffffff,#ececec);border:1.5px solid #b5b5b5;border-radius:5px"></div>
<svg class="a" style="left:2280px;top:1275px" width="24" height="22"><rect x="21" y="1" width="2" height="2" fill="#bdbdbd"/><rect x="15" y="7" width="2" height="2" fill="#bdbdbd"/><rect x="21" y="7" width="2" height="2" fill="#bdbdbd"/><rect x="9" y="13" width="2" height="2" fill="#bdbdbd"/><rect x="15" y="13" width="2" height="2" fill="#bdbdbd"/><rect x="21" y="13" width="2" height="2" fill="#bdbdbd"/><rect x="3" y="19" width="2" height="2" fill="#bdbdbd"/><rect x="9" y="19" width="2" height="2" fill="#bdbdbd"/><rect x="15" y="19" width="2" height="2" fill="#bdbdbd"/></svg>
</body></html>
